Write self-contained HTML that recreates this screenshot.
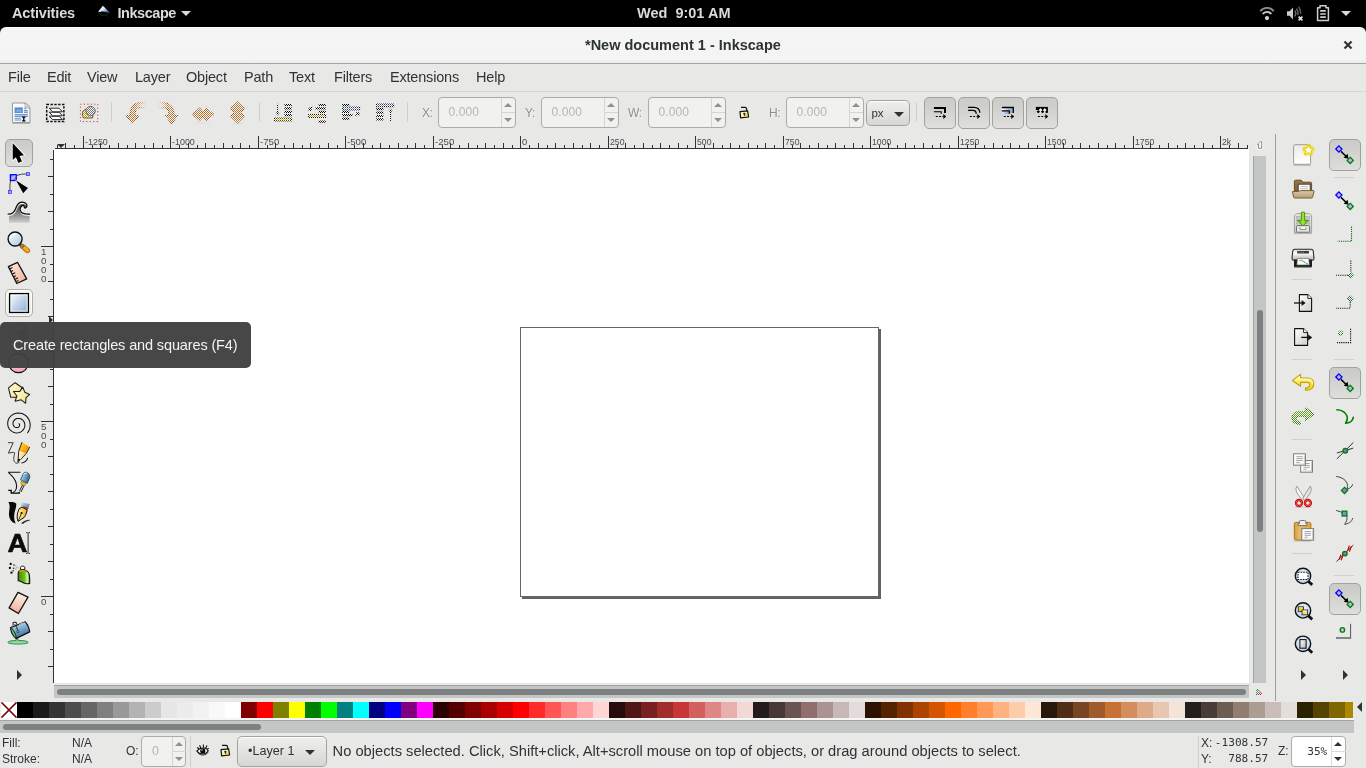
<!DOCTYPE html>
<html><head><meta charset="utf-8"><title>*New document 1 - Inkscape</title>
<style>
*{box-sizing:border-box;margin:0;padding:0}
html,body{width:1366px;height:768px;overflow:hidden;background:#e8e8e7;font-family:"Liberation Sans","DejaVu Sans",sans-serif;color:#2e3436}
.a{position:absolute;white-space:nowrap}
svg{overflow:visible}
#top{left:0;top:0;width:1366px;height:27px;background:#000}
#top .t{color:#dadada;font-weight:bold;font-size:14.5px;line-height:27px;top:0}
#title{left:0;top:27px;width:1366px;height:36px;background:linear-gradient(#fdfdfd 0,#fdfdfd 1px,#f5f5f5 1.5px,#f4f4f4 32px,#ececec 36px);border-radius:6px 6px 0 0}
#titleline{left:0;top:63px;width:1366px;height:1px;background:#a4a4a2}
#title .t{font-weight:bold;font-size:14.5px;line-height:36px;top:0}
#menu{left:0;top:64px;width:1366px;height:27px}
#menu .t{font-size:14.5px;line-height:27px;top:0;letter-spacing:-.2px}
#menuline{left:0;top:91px;width:1366px;height:1px;background:#d6d6d4}
#canvas{left:53px;top:149px;width:1196px;height:534px;background:#fff}
.lbl{font-size:12px;letter-spacing:-.4px;color:#8d9091;line-height:30px;top:98px;text-shadow:1px 1px 0 rgba(255,255,255,.55)}
.spin{top:97px;width:78px;height:31px;border:1px solid #acaca8;border-radius:4px;background:#f1f1f0}
.spin .v{left:9.5px;top:0;line-height:29px;font-size:12px;letter-spacing:.1px;color:#b4b6b6}
.spin .d{left:62px;top:0;width:1px;height:29px;background:#d5d5d3}
.spin .h{left:63px;top:14px;width:13px;height:1px;background:#d5d5d3}
.spin .u{left:65px;top:4.6px;border:4.5px solid transparent;border-top:0;border-bottom:4.6px solid #8e9192;width:0;height:0}
.spin .w{left:65px;top:20px;border:4.5px solid transparent;border-bottom:0;border-top:4.6px solid #8e9192;width:0;height:0}
.sep{width:1px;background:#cfcfcd}
.tb{top:97px;width:32px;height:32px;border:1px solid #a1a19d;border-radius:5px;background:linear-gradient(#cbcbc8,#cfcfcc 30%,#dfdfdd)}
.btn{border:1px solid #a1a19d;border-radius:5px;background:linear-gradient(#cacac7,#cfcfcc 30%,#dededc)}
.nb{border:1px solid #a3a39f;border-radius:5px;background:linear-gradient(#efefee,#e4e4e2 45%,#d6d6d4);box-shadow:inset 0 1px 0 rgba(255,255,255,.9)}
.hov{border:1px solid #adadaa;border-radius:5px;background:linear-gradient(#f7f7f6,#eaeae9);box-shadow:inset 0 0 0 1px rgba(255,255,255,.7)}
.rt{font-size:9.8px;fill:#474c4e;font-family:"Liberation Sans",sans-serif}
.trough{background:#c4c6c5}
.slider{background:#7c8081;border-radius:4px}
.st{font-size:12px;line-height:16px}
.mono{font-family:"DejaVu Sans Mono","Liberation Mono",monospace;font-size:11.1px;line-height:16px}
#tip{left:0;top:322px;width:251px;height:46px;background:rgba(63,63,63,.955);border-radius:5px;color:#f2f2f2;font-size:14.5px;line-height:46px;letter-spacing:-0.13px}
#w{left:0;top:0;width:1366px;height:768px;will-change:transform;background:#e8e8e7}
</style></head><body><div id="w" class="a">

<div id="top" class="a">
<span class="a t" style="left:12px;letter-spacing:-.15px">Activities</span>
<svg class="a" style="left:98px;top:5px" width="16" height="16" viewBox="0 0 16 16"><defs><linearGradient id="ilg" x1="0" y1="0" x2="1" y2="0.6"><stop offset="0" stop-color="#fff"/><stop offset="0.55" stop-color="#dfe6ee"/><stop offset="1" stop-color="#2f64a8"/></linearGradient></defs><path d="M4.9 .8L11.8 7.6C10.6 8 9.6 7.2 8.6 7.4C7.6 7.6 7.2 6.6 6.2 6.8C5.2 7 4.6 6 3.6 6.4C2.6 6.8 1.6 7.2 .2 6.6Z" fill="url(#ilg)"/><path d="M.4 7.4C1.5 9.5 4 10.6 6.4 10.4C8.4 10.2 10 9.4 11 8.2" fill="none" stroke="#2b2b2b" stroke-width="1"/><path d="M2 13.4H3.2M9.6 12.2H10.6" stroke="#1e1e1e" stroke-width="1"/></svg>
<span class="a t" style="left:117.5px;letter-spacing:-0.45px">Inkscape</span>
<span class="a" style="left:181px;top:11px;border:5px solid transparent;border-bottom:0;border-top:5.3px solid #dadada;width:0;height:0"></span>
<span class="a t" style="left:637px">Wed&nbsp; 9:01 AM</span>
<svg class="a" style="left:1259px;top:5px" width="16" height="16" viewBox="0 0 16 16"><path d="M1.3 6.2A8.4 8.4 0 0 1 14.7 6.2" fill="none" stroke="#8e8e8e" stroke-width="1.9"/><path d="M3.7 9A5.4 5.4 0 0 1 12.3 9" fill="none" stroke="#cfcfcf" stroke-width="1.9"/><circle cx="8" cy="13.1" r="2.1" fill="#d4d4d4"/></svg>
<svg class="a" style="left:1286px;top:5px" width="18" height="16" viewBox="0 0 18 16"><path d="M1 6.2H3.6L7 2.6V14.4L3.6 10.8H1Z" fill="#cdcdcd"/><path d="M8.6 5.6A4 4 0 0 1 8.6 11.4" fill="none" stroke="#777" stroke-width="1.3"/><path d="M10.4 3.6A6.6 6.6 0 0 1 11.6 10" fill="none" stroke="#6a6a6a" stroke-width="1.3"/><path d="M12.4 1.8A9 9 0 0 1 14.6 9" fill="none" stroke="#5a5a5a" stroke-width="1.3"/><path d="M12.6 11.6L16.4 15.4M16.4 11.6L12.6 15.4" stroke="#dcdcdc" stroke-width="1.7"/></svg>
<svg class="a" style="left:1315px;top:5px" width="16" height="16" viewBox="0 0 16 16"><path d="M5 .8H11V2.8H13.4V15.4H2.6V2.8H5Z" fill="none" stroke="#cfcfcf" stroke-width="1.5" stroke-linejoin="round"/><path d="M5.2 5.8H10.8M5.2 9H10.8M5.2 12.2H10.8" stroke="#cfcfcf" stroke-width="1.7"/></svg>
<span class="a" style="left:1341px;top:11px;border:5px solid transparent;border-bottom:0;border-top:5.5px solid #dadada;width:0;height:0"></span>
</div>
<div class="a" style="left:0;top:27px;width:1366px;height:10px;background:#000"></div><div id="title" class="a"><span class="a t" style="left:585px">*New document 1 - Inkscape</span>
<svg class="a" style="left:1343px;top:13px" width="10" height="10" viewBox="0 0 10 10"><path d="M1.5 1.5L8.5 8.5M8.5 1.5L1.5 8.5" stroke="#2e3436" stroke-width="2.2" fill="none"/></svg>
</div><div id="titleline" class="a"></div>
<div id="menu" class="a">
<span class="a t" style="left:8px">File</span>
<span class="a t" style="left:47px">Edit</span>
<span class="a t" style="left:87px">View</span>
<span class="a t" style="left:135px">Layer</span>
<span class="a t" style="left:186px">Object</span>
<span class="a t" style="left:244px">Path</span>
<span class="a t" style="left:289px">Text</span>
<span class="a t" style="left:334px">Filters</span>
<span class="a t" style="left:390px">Extensions</span>
<span class="a t" style="left:476px">Help</span>
</div><div id="menuline" class="a"></div>
<svg class="a" style="left:9px;top:101px" width="24" height="24" viewBox="0 0 24 24"><defs><linearGradient id="sag" x1="0" y1="0" x2="1" y2="1"><stop offset="0" stop-color="#ffffff"/><stop offset="1" stop-color="#ececec"/></linearGradient></defs><path d="M3.4 22.3H21.2" stroke="#8c8c8a" stroke-width="1.2" opacity=".6"/><path d="M3.5 2H15.5C18 2.6 20.4 5 21 7.6V21.5H3.5Z" fill="url(#sag)" stroke="#9a9a98" stroke-width="1" stroke-linejoin="round"/><path d="M15.5 2C16.4 3.6 16.4 5.4 16 6.8C17.6 6.4 19.6 6.6 21 7.6C20.4 5 18 2.6 15.5 2Z" fill="#d8d8d8" stroke="#9a9a98" stroke-width=".7" stroke-linejoin="round"/><rect x="5.6" y="6.4" width="8.2" height="5.6" fill="#5c8fd0"/><path d="M7 10.6L8.6 8.2L10.2 10L11.4 8.6L12.6 10.6Z" fill="#9fc0e8"/><path d="M15 7.8H17.4M15 9.6H18.8M15 11.4H18.8M5.6 13.6H18.8M5.6 15.4H18.8M5.6 17.2H12M5.6 19H12" stroke="#6a9ad6" stroke-width="1.1"/><path d="M13.2 16.2H16.4M13.2 19.8H16.4M14.8 16.4V19.6" stroke="#000" stroke-width="1.3"/></svg>
<svg class="a" style="left:43px;top:101px" width="24" height="24" viewBox="0 0 24 24"><rect x="3.7" y="3.4" width="17.2" height="17.2" fill="none" stroke="#111" stroke-width="1.5" stroke-dasharray="2.4 1.4"/><path d="M6.4 15.2L16 15.2L19.4 18.6H9.6Z" fill="#fff" stroke="#111" stroke-width=".9" stroke-linejoin="round"/><path d="M6.4 11.2L16 11.2L19.4 14.8H9.6Z" fill="#fff" stroke="#111" stroke-width=".9" stroke-linejoin="round"/><path d="M6.4 7.2L16 7.2L19.4 10.8H9.6Z" fill="#fff" stroke="#111" stroke-width=".9" stroke-linejoin="round"/></svg>
<svg class="a" style="left:77px;top:101px" width="24" height="24" viewBox="0 0 24 24"><defs><pattern id="stp" width="2" height="2" patternUnits="userSpaceOnUse"><rect width="2" height="2" fill="#f4f4f4"/><rect width="1" height="1" fill="#777"/><rect x="1" y="1" width="1" height="1" fill="#777"/></pattern><pattern id="stq" width="2" height="2" patternUnits="userSpaceOnUse"><rect width="2" height="2" fill="#fff8c8"/><rect width="1" height="1" fill="#c8960a"/><rect x="1" y="1" width="1" height="1" fill="#c8960a"/></pattern></defs><rect x="3.4" y="3.2" width="17.4" height="17.4" fill="none" stroke="#a82020" stroke-width=".9" stroke-dasharray="1.1 2.38"/><path d="M5.6 10.4L8.4 8.4L12 9.6L16 14L15.6 17H6.4L5.4 14.6Z" fill="url(#stq)" stroke="#555" stroke-width=".9" stroke-linejoin="round" shape-rendering="crispEdges"/><circle cx="13.6" cy="10" r="4.7" fill="url(#stp)" stroke="#666" stroke-width=".9"/></svg>
<div class="a sep" style="left:111px;top:102px;height:20px"></div>
<svg class="a" style="left:123px;top:101px" width="24" height="24" viewBox="0 0 24 24"><defs><pattern id="ckpa" width="2" height="2" patternUnits="userSpaceOnUse"><rect width="2" height="2" fill="#000"/><rect width="1" height="1" fill="#fff" shape-rendering="crispEdges"/><rect x="1" y="1" width="1" height="1" fill="#fff" shape-rendering="crispEdges"/></pattern><mask id="ckma" maskUnits="userSpaceOnUse" x="0" y="0" width="24" height="24"><rect width="24" height="24" fill="url(#ckpa)"/></mask><filter id="ckwa" x="0" y="0" width="1" height="1"><feColorMatrix values="0 0 0 0 1  0 0 0 0 1  0 0 0 0 1  0 0 0 1 0"/></filter><linearGradient id="ras" x1="0" y1="0" x2="1" y2="0"><stop offset="0" stop-color="#7c3a04"/><stop offset="0.6" stop-color="#7c3a04"/><stop offset="1" stop-color="#7c3a04" stop-opacity=".15"/></linearGradient><linearGradient id="rag" x1="0" y1="0" x2="1" y2="0"><stop offset="0" stop-color="#b06a26"/><stop offset="0.55" stop-color="#bd8044"/><stop offset="1" stop-color="#e6d0c0" stop-opacity=".3"/></linearGradient></defs><g filter="url(#ckwa)" opacity=".8"><path d="M9.4 22.8L3 14.4H7C7 7 10 1.8 17 1.8H22.3V6.9H17C13.5 6.9 12.1 9.5 12.1 14.4H16Z" fill="url(#rag)" stroke="url(#ras)" stroke-width=".9"/></g><g mask="url(#ckma)"><path d="M9.4 22.8L3 14.4H7C7 7 10 1.8 17 1.8H22.3V6.9H17C13.5 6.9 12.1 9.5 12.1 14.4H16Z" fill="url(#rag)" stroke="url(#ras)" stroke-width=".9"/></g></svg>
<svg class="a" style="left:157px;top:101px" width="24" height="24" viewBox="0 0 24 24"><defs><pattern id="ckpb" width="2" height="2" patternUnits="userSpaceOnUse"><rect width="2" height="2" fill="#000"/><rect width="1" height="1" fill="#fff" shape-rendering="crispEdges"/><rect x="1" y="1" width="1" height="1" fill="#fff" shape-rendering="crispEdges"/></pattern><mask id="ckmb" maskUnits="userSpaceOnUse" x="0" y="0" width="24" height="24"><rect width="24" height="24" fill="url(#ckpb)"/></mask><filter id="ckwb" x="0" y="0" width="1" height="1"><feColorMatrix values="0 0 0 0 1  0 0 0 0 1  0 0 0 0 1  0 0 0 1 0"/></filter><linearGradient id="rbs" x1="1" y1="0" x2="0" y2="0"><stop offset="0" stop-color="#7c3a04"/><stop offset="0.6" stop-color="#7c3a04"/><stop offset="1" stop-color="#7c3a04" stop-opacity=".15"/></linearGradient><linearGradient id="rbg" x1="1" y1="0" x2="0" y2="0"><stop offset="0" stop-color="#b06a26"/><stop offset="0.55" stop-color="#bd8044"/><stop offset="1" stop-color="#e6d0c0" stop-opacity=".3"/></linearGradient></defs><g filter="url(#ckwb)" opacity=".8"><path d="M14.6 22.8L21 14.4H17C17 7 14 1.8 7 1.8H1.7V6.9H7C10.5 6.9 11.9 9.5 11.9 14.4H8Z" fill="url(#rbg)" stroke="url(#rbs)" stroke-width=".9"/></g><g mask="url(#ckmb)"><path d="M14.6 22.8L21 14.4H17C17 7 14 1.8 7 1.8H1.7V6.9H7C10.5 6.9 11.9 9.5 11.9 14.4H8Z" fill="url(#rbg)" stroke="url(#rbs)" stroke-width=".9"/></g></svg>
<svg class="a" style="left:191px;top:101px" width="24" height="24" viewBox="0 0 24 24"><defs><pattern id="ckpc" width="2" height="2" patternUnits="userSpaceOnUse"><rect width="2" height="2" fill="#000"/><rect width="1" height="1" fill="#fff" shape-rendering="crispEdges"/><rect x="1" y="1" width="1" height="1" fill="#fff" shape-rendering="crispEdges"/></pattern><mask id="ckmc" maskUnits="userSpaceOnUse" x="0" y="0" width="24" height="24"><rect width="24" height="24" fill="url(#ckpc)"/></mask><filter id="ckwc" x="0" y="0" width="1" height="1"><feColorMatrix values="0 0 0 0 1  0 0 0 0 1  0 0 0 0 1  0 0 0 1 0"/></filter></defs><g filter="url(#ckwc)" opacity=".8"><path d="M1.7 13.4L8.5 7L10.9 9.2V11H13.1V9.2L15.5 7L23 13.4L15.5 19.8L13.1 17.6V15.8H10.9V17.6L8.5 19.8Z" fill="#b5742e" stroke="#7c3a04" stroke-width=".9"/></g><g mask="url(#ckmc)"><path d="M1.7 13.4L8.5 7L10.9 9.2V11H13.1V9.2L15.5 7L23 13.4L15.5 19.8L13.1 17.6V15.8H10.9V17.6L8.5 19.8Z" fill="#b5742e" stroke="#7c3a04" stroke-width=".9"/></g><path d="M3 22H21" stroke="#888" stroke-width="1" opacity=".08"/></svg>
<svg class="a" style="left:225px;top:101px" width="24" height="24" viewBox="0 0 24 24"><defs><pattern id="ckpd" width="2" height="2" patternUnits="userSpaceOnUse"><rect width="2" height="2" fill="#000"/><rect width="1" height="1" fill="#fff" shape-rendering="crispEdges"/><rect x="1" y="1" width="1" height="1" fill="#fff" shape-rendering="crispEdges"/></pattern><mask id="ckmd" maskUnits="userSpaceOnUse" x="0" y="0" width="24" height="24"><rect width="24" height="24" fill="url(#ckpd)"/></mask><filter id="ckwd" x="0" y="0" width="1" height="1"><feColorMatrix values="0 0 0 0 1  0 0 0 0 1  0 0 0 0 1  0 0 0 1 0"/></filter></defs><g filter="url(#ckwd)" opacity=".8"><path d="M12.5 .9L19.3 7.6L17.2 10.4H14.9V12.6H17.2L19.3 15.3L12.5 22L5.7 15.3L7.8 12.6H10.1V10.4H7.8L5.7 7.6Z" fill="#b5742e" stroke="#7c3a04" stroke-width=".9"/></g><g mask="url(#ckmd)"><path d="M12.5 .9L19.3 7.6L17.2 10.4H14.9V12.6H17.2L19.3 15.3L12.5 22L5.7 15.3L7.8 12.6H10.1V10.4H7.8L5.7 7.6Z" fill="#b5742e" stroke="#7c3a04" stroke-width=".9"/></g><path d="M7.4 22.8H17.4" stroke="#888" stroke-width="1.2" opacity=".12"/></svg>
<div class="a sep" style="left:259px;top:102px;height:20px"></div>
<svg class="a" style="left:271px;top:101px" width="24" height="24" viewBox="0 0 24 24"><defs><pattern id="ckpe" width="2" height="2" patternUnits="userSpaceOnUse"><rect width="2" height="2" fill="#000"/><rect width="1" height="1" fill="#fff" shape-rendering="crispEdges"/><rect x="1" y="1" width="1" height="1" fill="#fff" shape-rendering="crispEdges"/></pattern><mask id="ckme" maskUnits="userSpaceOnUse" x="0" y="0" width="24" height="24"><rect width="24" height="24" fill="url(#ckpe)"/></mask><filter id="ckwe" x="0" y="0" width="1" height="1"><feColorMatrix values="0 0 0 0 1  0 0 0 0 1  0 0 0 0 1  0 0 0 1 0"/></filter></defs><g filter="url(#ckwe)" opacity=".8"><path d="M13.4 4H20.8M13.4 7.4H20.8M13.4 10.8H20.8M13.4 14.2H20.8" stroke="#000" stroke-width="2.2"/><rect x="3.6" y="17.1" width="17" height="2.8" fill="#e0b000" stroke="#000" stroke-width="1"/><path d="M6.6 2.8V12" stroke="#000" stroke-width="1"/><path d="M4.2 11.4H9L6.6 14.6Z" fill="#000"/></g><g mask="url(#ckme)"><path d="M13.4 4H20.8M13.4 7.4H20.8M13.4 10.8H20.8M13.4 14.2H20.8" stroke="#000" stroke-width="2.2"/><rect x="3.6" y="17.1" width="17" height="2.8" fill="#e0b000" stroke="#000" stroke-width="1"/><path d="M6.6 2.8V12" stroke="#000" stroke-width="1"/><path d="M4.2 11.4H9L6.6 14.6Z" fill="#000"/></g></svg>
<svg class="a" style="left:305px;top:101px" width="24" height="24" viewBox="0 0 24 24"><defs><pattern id="ckpf" width="2" height="2" patternUnits="userSpaceOnUse"><rect width="2" height="2" fill="#000"/><rect width="1" height="1" fill="#fff" shape-rendering="crispEdges"/><rect x="1" y="1" width="1" height="1" fill="#fff" shape-rendering="crispEdges"/></pattern><mask id="ckmf" maskUnits="userSpaceOnUse" x="0" y="0" width="24" height="24"><rect width="24" height="24" fill="url(#ckpf)"/></mask><filter id="ckwf" x="0" y="0" width="1" height="1"><feColorMatrix values="0 0 0 0 1  0 0 0 0 1  0 0 0 0 1  0 0 0 1 0"/></filter></defs><g filter="url(#ckwf)" opacity=".8"><path d="M13.6 4H20.8M10.4 7.4H20.8M13.6 10.8H20.8M13.6 20.6H20.8" stroke="#000" stroke-width="2.2"/><rect x="3.6" y="13.6" width="17" height="2.8" fill="#e0b000" stroke="#000" stroke-width="1"/><path d="M7.4 5.8L4.6 8.6M4.2 6.4V9H6.8" fill="none" stroke="#000" stroke-width="1.3"/></g><g mask="url(#ckmf)"><path d="M13.6 4H20.8M10.4 7.4H20.8M13.6 10.8H20.8M13.6 20.6H20.8" stroke="#000" stroke-width="2.2"/><rect x="3.6" y="13.6" width="17" height="2.8" fill="#e0b000" stroke="#000" stroke-width="1"/><path d="M7.4 5.8L4.6 8.6M4.2 6.4V9H6.8" fill="none" stroke="#000" stroke-width="1.3"/></g></svg>
<svg class="a" style="left:339px;top:101px" width="24" height="24" viewBox="0 0 24 24"><defs><pattern id="ckpg" width="2" height="2" patternUnits="userSpaceOnUse"><rect width="2" height="2" fill="#000"/><rect width="1" height="1" fill="#fff" shape-rendering="crispEdges"/><rect x="1" y="1" width="1" height="1" fill="#fff" shape-rendering="crispEdges"/></pattern><mask id="ckmg" maskUnits="userSpaceOnUse" x="0" y="0" width="24" height="24"><rect width="24" height="24" fill="url(#ckpg)"/></mask><filter id="ckwg" x="0" y="0" width="1" height="1"><feColorMatrix values="0 0 0 0 1  0 0 0 0 1  0 0 0 0 1  0 0 0 1 0"/></filter></defs><g filter="url(#ckwg)" opacity=".8"><path d="M3.2 4H10.4M3.2 10.8H10.4M3.2 14.2H13.6M3.2 17.6H10.4" stroke="#000" stroke-width="2.2"/><rect x="3.6" y="6.1" width="17" height="2.8" fill="#7aa0d8" stroke="#000" stroke-width="1"/><path d="M16.6 15L19.4 12.2M17.2 11.8H19.8V14.4" fill="none" stroke="#000" stroke-width="1.3"/></g><g mask="url(#ckmg)"><path d="M3.2 4H10.4M3.2 10.8H10.4M3.2 14.2H13.6M3.2 17.6H10.4" stroke="#000" stroke-width="2.2"/><rect x="3.6" y="6.1" width="17" height="2.8" fill="#7aa0d8" stroke="#000" stroke-width="1"/><path d="M16.6 15L19.4 12.2M17.2 11.8H19.8V14.4" fill="none" stroke="#000" stroke-width="1.3"/></g></svg>
<svg class="a" style="left:373px;top:101px" width="24" height="24" viewBox="0 0 24 24"><defs><pattern id="ckph" width="2" height="2" patternUnits="userSpaceOnUse"><rect width="2" height="2" fill="#000"/><rect width="1" height="1" fill="#fff" shape-rendering="crispEdges"/><rect x="1" y="1" width="1" height="1" fill="#fff" shape-rendering="crispEdges"/></pattern><mask id="ckmh" maskUnits="userSpaceOnUse" x="0" y="0" width="24" height="24"><rect width="24" height="24" fill="url(#ckph)"/></mask><filter id="ckwh" x="0" y="0" width="1" height="1"><feColorMatrix values="0 0 0 0 1  0 0 0 0 1  0 0 0 0 1  0 0 0 1 0"/></filter></defs><g filter="url(#ckwh)" opacity=".8"><path d="M3.2 8.2H10.4M3.2 11.6H10.4M3.2 15H10.4M3.2 18.4H10.4" stroke="#000" stroke-width="2.2"/><rect x="3.6" y="3.1" width="17" height="2.6" fill="#7aa0d8" stroke="#000" stroke-width="1"/><path d="M17.6 20V10" stroke="#000" stroke-width="1"/><path d="M15.2 10.6H20L17.6 7.4Z" fill="#000"/></g><g mask="url(#ckmh)"><path d="M3.2 8.2H10.4M3.2 11.6H10.4M3.2 15H10.4M3.2 18.4H10.4" stroke="#000" stroke-width="2.2"/><rect x="3.6" y="3.1" width="17" height="2.6" fill="#7aa0d8" stroke="#000" stroke-width="1"/><path d="M17.6 20V10" stroke="#000" stroke-width="1"/><path d="M15.2 10.6H20L17.6 7.4Z" fill="#000"/></g></svg>
<div class="a sep" style="left:407px;top:102px;height:20px"></div>
<span class="a lbl" style="left:422px">X:</span>
<div class="a spin" style="left:438px"><span class="a v">0.000</span><span class="a d"></span><span class="a h"></span><span class="a u"></span><span class="a w"></span></div>
<span class="a lbl" style="left:525px">Y:</span>
<div class="a spin" style="left:541px"><span class="a v">0.000</span><span class="a d"></span><span class="a h"></span><span class="a u"></span><span class="a w"></span></div>
<span class="a lbl" style="left:628px">W:</span>
<div class="a spin" style="left:648px"><span class="a v">0.000</span><span class="a d"></span><span class="a h"></span><span class="a u"></span><span class="a w"></span></div>
<svg class="a" style="left:738px;top:106px" width="12" height="13" viewBox="0 0 12 13"><defs><linearGradient id="lkg1" x1="0" y1="0" x2="1" y2="1"><stop offset="0" stop-color="#ffffff"/><stop offset="0.5" stop-color="#fbf0a0"/><stop offset="1" stop-color="#e8c81a"/></linearGradient></defs><path d="M3 1.4H7C8.5 1.4 8.8 2.8 8.9 5.2" fill="none" stroke="#111" stroke-width="1.2"/><path d="M2 5.6L9.6 4.9L10.6 11L2.6 11.8Z" fill="url(#lkg1)" stroke="#111" stroke-width="1.2" stroke-linejoin="round"/><path d="M5.4 7.2H7.2L6.6 9.8Z" fill="#111" stroke="#111" stroke-width=".5"/></svg>
<span class="a lbl" style="left:769px">H:</span>
<div class="a spin" style="left:786px"><span class="a v">0.000</span><span class="a d"></span><span class="a h"></span><span class="a u"></span><span class="a w"></span></div>
<div class="a nb" style="left:866px;top:100px;width:44px;height:26px"><span class="a" style="left:4.5px;top:0;line-height:24px;font-size:11.6px;letter-spacing:-.3px">px</span><span class="a" style="left:27px;top:10.5px;border:5.2px solid transparent;border-bottom:0;border-top:5.2px solid #2e3436;width:0;height:0"></span></div>
<div class="a sep" style="left:916px;top:102px;height:20px"></div>
<div class="a tb" style="left:924px"><svg class="a" style="left:7px;top:7px" width="16" height="16" viewBox="0 0 16 16"><path d="M1.9 2.9H13V7.9" fill="none" stroke="#000" stroke-width="2"/><path d="M1.9 6.7H9.2V8.7" fill="none" stroke="#000" stroke-width="1.1"/><path d="M3.8 11.5H11.4" stroke="#000" stroke-width="1.2" stroke-dasharray="2 1.3"/><path d="M14.2 11.5L11.3 9.1V13.9Z" fill="#000"/></svg></div>
<div class="a tb" style="left:958px"><svg class="a" style="left:7px;top:7px" width="16" height="16" viewBox="0 0 16 16"><path d="M2.1 2.4H8C11.5 2.4 13.8 4.5 13.8 7.7" fill="none" stroke="#000" stroke-width="1.3"/><path d="M2.1 5.4H7C9 5.4 10.2 7 10.2 8.7" fill="none" stroke="#000" stroke-width="1.3"/><path d="M3.9 11.5H11.4" stroke="#000" stroke-width="1.2" stroke-dasharray="2 1.3"/><path d="M14.2 11.5L11.3 9.1V13.9Z" fill="#000"/></svg></div>
<div class="a tb" style="left:992px"><svg class="a" style="left:7px;top:7px" width="16" height="16" viewBox="0 0 16 16"><defs><linearGradient id="tgg" x1="0" y1="0" x2="1" y2="0"><stop offset="0" stop-color="#ffffff"/><stop offset="1" stop-color="#7ea6d8"/></linearGradient><linearGradient id="tgh" x1="0" y1="0" x2="1" y2="0"><stop offset="0" stop-color="#e0eaf6"/><stop offset="1" stop-color="#6f98cc"/></linearGradient></defs><path d="M1.9 2.9H12.8V7.9H9.9V5.4H1.9Z" fill="url(#tgg)"/><rect x="1.9" y="6.4" width="7" height="2.4" fill="url(#tgh)"/><path d="M1.9 2.5H13.3V7.9" fill="none" stroke="#000" stroke-width="1.3"/><path d="M1.9 5.9H9.4V8.7" fill="none" stroke="#000" stroke-width="1.3"/><path d="M3.8 11.5H11.4" stroke="#000" stroke-width="1.2" stroke-dasharray="2 1.3"/><path d="M14.2 11.5L11.3 9.1V13.9Z" fill="#000"/></svg></div>
<div class="a tb" style="left:1026px"><svg class="a" style="left:7px;top:7px" width="16" height="16" viewBox="0 0 16 16"><rect x="1.9" y="1.9" width="12" height="6" fill="#000"/><rect x="1.9" y="5" width="9.6" height="3.2" fill="#e4e4e2"/><path d="M6.5 3.1L8.3 4.9L6.5 6.7L4.7 4.9ZM10.8 3.1L12.6 4.9L10.8 6.7L9 4.9Z" fill="#f0f0f0"/><path d="M4.3 4.9L6.1 6.7L4.3 8.3L2.5 6.7ZM8.6 4.9L10.4 6.7L8.6 8.3L6.8 6.7Z" fill="#000"/><path d="M3.9 11.5H11.4" stroke="#000" stroke-width="1.2" stroke-dasharray="2 1.3"/><path d="M14.2 11.5L11.3 9.1V13.9Z" fill="#000"/></svg></div>
<div id="canvas" class="a"></div>
<svg class="a" style="left:0;top:130px" width="1280" height="560" viewBox="0 130 1280 560" shape-rendering="crispEdges"><rect x="55" y="148" width="1193" height="1" fill="#2e3436"/><rect x="57" y="145" width="1" height="3" fill="#2e3436"/><rect x="65" y="143" width="1" height="5" fill="#2e3436"/><rect x="74" y="145" width="1" height="3" fill="#2e3436"/><rect x="83" y="136" width="1" height="12" fill="#2e3436"/><text class="rt" x="85" y="144.6" shape-rendering="auto" textLength="22.8" lengthAdjust="spacingAndGlyphs">-1250</text><rect x="92" y="145" width="1" height="3" fill="#2e3436"/><rect x="100" y="143" width="1" height="5" fill="#2e3436"/><rect x="109" y="145" width="1" height="3" fill="#2e3436"/><rect x="118" y="143" width="1" height="5" fill="#2e3436"/><rect x="127" y="145" width="1" height="3" fill="#2e3436"/><rect x="135" y="143" width="1" height="5" fill="#2e3436"/><rect x="144" y="145" width="1" height="3" fill="#2e3436"/><rect x="153" y="143" width="1" height="5" fill="#2e3436"/><rect x="162" y="145" width="1" height="3" fill="#2e3436"/><rect x="170" y="136" width="1" height="12" fill="#2e3436"/><text class="rt" x="172" y="144.6" shape-rendering="auto" textLength="22.8" lengthAdjust="spacingAndGlyphs">-1000</text><rect x="179" y="145" width="1" height="3" fill="#2e3436"/><rect x="188" y="143" width="1" height="5" fill="#2e3436"/><rect x="197" y="145" width="1" height="3" fill="#2e3436"/><rect x="205" y="143" width="1" height="5" fill="#2e3436"/><rect x="214" y="145" width="1" height="3" fill="#2e3436"/><rect x="223" y="143" width="1" height="5" fill="#2e3436"/><rect x="232" y="145" width="1" height="3" fill="#2e3436"/><rect x="240" y="143" width="1" height="5" fill="#2e3436"/><rect x="249" y="145" width="1" height="3" fill="#2e3436"/><rect x="258" y="136" width="1" height="12" fill="#2e3436"/><text class="rt" x="260" y="144.6" shape-rendering="auto" textLength="19.3" lengthAdjust="spacingAndGlyphs">-750</text><rect x="267" y="145" width="1" height="3" fill="#2e3436"/><rect x="275" y="143" width="1" height="5" fill="#2e3436"/><rect x="284" y="145" width="1" height="3" fill="#2e3436"/><rect x="293" y="143" width="1" height="5" fill="#2e3436"/><rect x="302" y="145" width="1" height="3" fill="#2e3436"/><rect x="310" y="143" width="1" height="5" fill="#2e3436"/><rect x="319" y="145" width="1" height="3" fill="#2e3436"/><rect x="328" y="143" width="1" height="5" fill="#2e3436"/><rect x="337" y="145" width="1" height="3" fill="#2e3436"/><rect x="345" y="136" width="1" height="12" fill="#2e3436"/><text class="rt" x="347" y="144.6" shape-rendering="auto" textLength="19.3" lengthAdjust="spacingAndGlyphs">-500</text><rect x="354" y="145" width="1" height="3" fill="#2e3436"/><rect x="363" y="143" width="1" height="5" fill="#2e3436"/><rect x="372" y="145" width="1" height="3" fill="#2e3436"/><rect x="380" y="143" width="1" height="5" fill="#2e3436"/><rect x="389" y="145" width="1" height="3" fill="#2e3436"/><rect x="398" y="143" width="1" height="5" fill="#2e3436"/><rect x="407" y="145" width="1" height="3" fill="#2e3436"/><rect x="415" y="143" width="1" height="5" fill="#2e3436"/><rect x="424" y="145" width="1" height="3" fill="#2e3436"/><rect x="433" y="136" width="1" height="12" fill="#2e3436"/><text class="rt" x="435" y="144.6" shape-rendering="auto" textLength="19.3" lengthAdjust="spacingAndGlyphs">-250</text><rect x="442" y="145" width="1" height="3" fill="#2e3436"/><rect x="450" y="143" width="1" height="5" fill="#2e3436"/><rect x="459" y="145" width="1" height="3" fill="#2e3436"/><rect x="468" y="143" width="1" height="5" fill="#2e3436"/><rect x="477" y="145" width="1" height="3" fill="#2e3436"/><rect x="485" y="143" width="1" height="5" fill="#2e3436"/><rect x="494" y="145" width="1" height="3" fill="#2e3436"/><rect x="503" y="143" width="1" height="5" fill="#2e3436"/><rect x="512" y="145" width="1" height="3" fill="#2e3436"/><rect x="520" y="136" width="1" height="12" fill="#2e3436"/><text class="rt" x="522" y="144.6" shape-rendering="auto" textLength="5.2" lengthAdjust="spacingAndGlyphs">0</text><rect x="529" y="145" width="1" height="3" fill="#2e3436"/><rect x="538" y="143" width="1" height="5" fill="#2e3436"/><rect x="547" y="145" width="1" height="3" fill="#2e3436"/><rect x="555" y="143" width="1" height="5" fill="#2e3436"/><rect x="564" y="145" width="1" height="3" fill="#2e3436"/><rect x="573" y="143" width="1" height="5" fill="#2e3436"/><rect x="582" y="145" width="1" height="3" fill="#2e3436"/><rect x="590" y="143" width="1" height="5" fill="#2e3436"/><rect x="599" y="145" width="1" height="3" fill="#2e3436"/><rect x="608" y="136" width="1" height="12" fill="#2e3436"/><text class="rt" x="610" y="144.6" shape-rendering="auto" textLength="14.5" lengthAdjust="spacingAndGlyphs">250</text><rect x="617" y="145" width="1" height="3" fill="#2e3436"/><rect x="625" y="143" width="1" height="5" fill="#2e3436"/><rect x="634" y="145" width="1" height="3" fill="#2e3436"/><rect x="643" y="143" width="1" height="5" fill="#2e3436"/><rect x="652" y="145" width="1" height="3" fill="#2e3436"/><rect x="660" y="143" width="1" height="5" fill="#2e3436"/><rect x="669" y="145" width="1" height="3" fill="#2e3436"/><rect x="678" y="143" width="1" height="5" fill="#2e3436"/><rect x="687" y="145" width="1" height="3" fill="#2e3436"/><rect x="695" y="136" width="1" height="12" fill="#2e3436"/><text class="rt" x="697" y="144.6" shape-rendering="auto" textLength="14.5" lengthAdjust="spacingAndGlyphs">500</text><rect x="704" y="145" width="1" height="3" fill="#2e3436"/><rect x="713" y="143" width="1" height="5" fill="#2e3436"/><rect x="722" y="145" width="1" height="3" fill="#2e3436"/><rect x="730" y="143" width="1" height="5" fill="#2e3436"/><rect x="739" y="145" width="1" height="3" fill="#2e3436"/><rect x="748" y="143" width="1" height="5" fill="#2e3436"/><rect x="757" y="145" width="1" height="3" fill="#2e3436"/><rect x="765" y="143" width="1" height="5" fill="#2e3436"/><rect x="774" y="145" width="1" height="3" fill="#2e3436"/><rect x="783" y="136" width="1" height="12" fill="#2e3436"/><text class="rt" x="785" y="144.6" shape-rendering="auto" textLength="14.5" lengthAdjust="spacingAndGlyphs">750</text><rect x="792" y="145" width="1" height="3" fill="#2e3436"/><rect x="800" y="143" width="1" height="5" fill="#2e3436"/><rect x="809" y="145" width="1" height="3" fill="#2e3436"/><rect x="818" y="143" width="1" height="5" fill="#2e3436"/><rect x="827" y="145" width="1" height="3" fill="#2e3436"/><rect x="835" y="143" width="1" height="5" fill="#2e3436"/><rect x="844" y="145" width="1" height="3" fill="#2e3436"/><rect x="853" y="143" width="1" height="5" fill="#2e3436"/><rect x="862" y="145" width="1" height="3" fill="#2e3436"/><rect x="870" y="136" width="1" height="12" fill="#2e3436"/><text class="rt" x="872" y="144.6" shape-rendering="auto" textLength="19.3" lengthAdjust="spacingAndGlyphs">1000</text><rect x="879" y="145" width="1" height="3" fill="#2e3436"/><rect x="888" y="143" width="1" height="5" fill="#2e3436"/><rect x="897" y="145" width="1" height="3" fill="#2e3436"/><rect x="905" y="143" width="1" height="5" fill="#2e3436"/><rect x="914" y="145" width="1" height="3" fill="#2e3436"/><rect x="923" y="143" width="1" height="5" fill="#2e3436"/><rect x="932" y="145" width="1" height="3" fill="#2e3436"/><rect x="940" y="143" width="1" height="5" fill="#2e3436"/><rect x="949" y="145" width="1" height="3" fill="#2e3436"/><rect x="958" y="136" width="1" height="12" fill="#2e3436"/><text class="rt" x="960" y="144.6" shape-rendering="auto" textLength="19.3" lengthAdjust="spacingAndGlyphs">1250</text><rect x="967" y="145" width="1" height="3" fill="#2e3436"/><rect x="975" y="143" width="1" height="5" fill="#2e3436"/><rect x="984" y="145" width="1" height="3" fill="#2e3436"/><rect x="993" y="143" width="1" height="5" fill="#2e3436"/><rect x="1002" y="145" width="1" height="3" fill="#2e3436"/><rect x="1010" y="143" width="1" height="5" fill="#2e3436"/><rect x="1019" y="145" width="1" height="3" fill="#2e3436"/><rect x="1028" y="143" width="1" height="5" fill="#2e3436"/><rect x="1037" y="145" width="1" height="3" fill="#2e3436"/><rect x="1045" y="136" width="1" height="12" fill="#2e3436"/><text class="rt" x="1047" y="144.6" shape-rendering="auto" textLength="19.3" lengthAdjust="spacingAndGlyphs">1500</text><rect x="1054" y="145" width="1" height="3" fill="#2e3436"/><rect x="1063" y="143" width="1" height="5" fill="#2e3436"/><rect x="1072" y="145" width="1" height="3" fill="#2e3436"/><rect x="1080" y="143" width="1" height="5" fill="#2e3436"/><rect x="1089" y="145" width="1" height="3" fill="#2e3436"/><rect x="1098" y="143" width="1" height="5" fill="#2e3436"/><rect x="1107" y="145" width="1" height="3" fill="#2e3436"/><rect x="1115" y="143" width="1" height="5" fill="#2e3436"/><rect x="1124" y="145" width="1" height="3" fill="#2e3436"/><rect x="1133" y="136" width="1" height="12" fill="#2e3436"/><text class="rt" x="1135" y="144.6" shape-rendering="auto" textLength="19.3" lengthAdjust="spacingAndGlyphs">1750</text><rect x="1142" y="145" width="1" height="3" fill="#2e3436"/><rect x="1150" y="143" width="1" height="5" fill="#2e3436"/><rect x="1159" y="145" width="1" height="3" fill="#2e3436"/><rect x="1168" y="143" width="1" height="5" fill="#2e3436"/><rect x="1177" y="145" width="1" height="3" fill="#2e3436"/><rect x="1185" y="143" width="1" height="5" fill="#2e3436"/><rect x="1194" y="145" width="1" height="3" fill="#2e3436"/><rect x="1203" y="143" width="1" height="5" fill="#2e3436"/><rect x="1212" y="145" width="1" height="3" fill="#2e3436"/><rect x="1220" y="136" width="1" height="12" fill="#2e3436"/><text class="rt" x="1222" y="144.6" shape-rendering="auto" textLength="9.2" lengthAdjust="spacingAndGlyphs">2k</text><rect x="1229" y="145" width="1" height="3" fill="#2e3436"/><rect x="1238" y="143" width="1" height="5" fill="#2e3436"/><rect x="1247" y="145" width="1" height="3" fill="#2e3436"/><rect x="53" y="150" width="1" height="533" fill="#2e3436"/><rect x="50" y="159" width="3" height="1" fill="#2e3436"/><rect x="48" y="176" width="5" height="1" fill="#2e3436"/><rect x="50" y="194" width="3" height="1" fill="#2e3436"/><rect x="48" y="211" width="5" height="1" fill="#2e3436"/><rect x="50" y="229" width="3" height="1" fill="#2e3436"/><rect x="41" y="246" width="12" height="1" fill="#2e3436"/><text class="rt" x="41" y="254.6" shape-rendering="auto">1</text><text class="rt" x="41" y="263.6" shape-rendering="auto">0</text><text class="rt" x="41" y="272.6" shape-rendering="auto">0</text><text class="rt" x="41" y="281.6" shape-rendering="auto">0</text><rect x="50" y="264" width="3" height="1" fill="#2e3436"/><rect x="48" y="281" width="5" height="1" fill="#2e3436"/><rect x="50" y="299" width="3" height="1" fill="#2e3436"/><rect x="48" y="316" width="5" height="1" fill="#2e3436"/><rect x="50" y="334" width="3" height="1" fill="#2e3436"/><rect x="48" y="351" width="5" height="1" fill="#2e3436"/><rect x="50" y="369" width="3" height="1" fill="#2e3436"/><rect x="48" y="386" width="5" height="1" fill="#2e3436"/><rect x="50" y="404" width="3" height="1" fill="#2e3436"/><rect x="41" y="421" width="12" height="1" fill="#2e3436"/><text class="rt" x="41" y="429.6" shape-rendering="auto">5</text><text class="rt" x="41" y="438.6" shape-rendering="auto">0</text><text class="rt" x="41" y="447.6" shape-rendering="auto">0</text><rect x="50" y="439" width="3" height="1" fill="#2e3436"/><rect x="48" y="456" width="5" height="1" fill="#2e3436"/><rect x="50" y="474" width="3" height="1" fill="#2e3436"/><rect x="48" y="491" width="5" height="1" fill="#2e3436"/><rect x="50" y="509" width="3" height="1" fill="#2e3436"/><rect x="48" y="526" width="5" height="1" fill="#2e3436"/><rect x="50" y="544" width="3" height="1" fill="#2e3436"/><rect x="48" y="561" width="5" height="1" fill="#2e3436"/><rect x="50" y="579" width="3" height="1" fill="#2e3436"/><rect x="41" y="596" width="12" height="1" fill="#2e3436"/><text class="rt" x="41" y="604.6" shape-rendering="auto">0</text><rect x="50" y="614" width="3" height="1" fill="#2e3436"/><rect x="48" y="631" width="5" height="1" fill="#2e3436"/><rect x="50" y="649" width="3" height="1" fill="#2e3436"/><rect x="48" y="666" width="5" height="1" fill="#2e3436"/><path d="M57 144h8l-4 4z" fill="#2e3436" shape-rendering="auto"/><path d="M49 316v8l4-4z" fill="#2e3436" shape-rendering="auto"/></svg>
<div class="a" style="left:520px;top:327px;width:359px;height:270px;background:#fff;border:1px solid #666;box-shadow:2px 2px 0 #626262"></div>
<div class="a trough" style="left:54px;top:685px;width:1195px;height:13px;border-top:1px solid #a2a4a1"></div>
<div class="a slider" style="left:57px;top:689px;width:1189px;height:6px"></div>
<div class="a trough" style="left:1253px;top:156px;width:13px;height:527px;border-left:1px solid #a2a4a1"></div>
<div class="a slider" style="left:1257px;top:310px;width:6px;height:222px"></div>
<svg class="a" style="left:1254px;top:139px" width="12" height="12" viewBox="0 0 12 12"><path d="M4.2 4.4L6.2 2.4H7.6V9.3H4.6V5.4L3.6 6Z" fill="#fff" stroke="#fff" stroke-width="2.6" stroke-linejoin="round" opacity=".75"/><path d="M4.2 4.4L6.2 2.4H7.6V9.3H4.6V5.4L3.6 6Z" fill="#fff" stroke="#7e817c" stroke-width=".9" stroke-linejoin="round"/></svg>
<svg class="a" style="left:1255px;top:688px" width="8" height="8" viewBox="0 0 8 8"><rect x="2" y="1" width="1" height="1" fill="#20b020"/><rect x="1" y="2" width="1" height="1" fill="#20b020"/><rect x="3" y="2" width="1" height="1" fill="#30a830"/><rect x="2" y="3" width="1" height="1" fill="#40b040"/><rect x="4" y="3" width="1" height="1" fill="#b0b020"/><rect x="1" y="4" width="1" height="1" fill="#20b090"/><rect x="3" y="4" width="1" height="1" fill="#909090"/><rect x="5" y="4" width="1" height="1" fill="#d07020"/><rect x="2" y="5" width="1" height="1" fill="#3080c0"/><rect x="4" y="5" width="1" height="1" fill="#c04060"/><rect x="6" y="5" width="1" height="1" fill="#d02020"/><rect x="1" y="6" width="1" height="1" fill="#2050c0"/><rect x="3" y="6" width="1" height="1" fill="#a030c0"/><rect x="5" y="6" width="1" height="1" fill="#c02070"/><rect x="4" y="2" width="1" height="1" fill="#c8c8c8"/><rect x="5" y="3" width="1" height="1" fill="#c0c0c0"/></svg>
<div class="a" style="left:1275px;top:134px;width:1px;height:567px;background:#9d9d99"></div>
<div class="a btn" style="left:5px;top:139px;width:28px;height:28px"></div>
<div class="a hov" style="left:5px;top:289px;width:28px;height:28px"></div>
<svg class="a" style="left:7px;top:141px" width="24" height="24" viewBox="0 0 24 24"><path d="M5.7 2V19L8.9 16.2L11.4 21.9L15 20.2L12.6 15L17 14.2Z" fill="#000" stroke="#fff" stroke-width="1.8" stroke-linejoin="round" paint-order="stroke"/></svg>
<svg class="a" style="left:7px;top:171px" width="24" height="24" viewBox="0 0 24 24"><path d="M9.7 4.6C13 3.2 16 2.9 20 3M3.6 10C2.8 13 2.8 16 3 20" fill="none" stroke="#333" stroke-width="0.9"/><rect x="3.4" y="3.7" width="5.8" height="5.8" fill="#9a9af0" stroke="#0000ff" stroke-width="1.3"/><path d="M4.5 8.5L8.3 4.6" stroke="#c8c8ff" stroke-width="1.2"/><rect x="19.4" y="1.6" width="3" height="3" fill="#a0a0ff" stroke="#3a3aff" stroke-width="0.8"/><rect x="1.4" y="19.5" width="3" height="3" fill="#a0a0ff" stroke="#3a3aff" stroke-width="0.8"/><path d="M8.9 9.2L21 17L16.2 22.2Z" fill="#000" stroke="#fff" stroke-width="1" stroke-linejoin="round" paint-order="stroke"/></svg>
<svg class="a" style="left:7px;top:201px" width="24" height="24" viewBox="0 0 24 24"><defs><linearGradient id="twg" x1="0" y1="0" x2="0" y2="1"><stop offset="0" stop-color="#333"/><stop offset="0.5" stop-color="#7c7c7c"/><stop offset="1" stop-color="#d0d0d0"/></linearGradient></defs><path d="M1.2 13.2C7 13.2 8 9 9.5 5.5C11 2 14 .9 16.5 1.3C19.5 1.8 20.6 4.5 19.6 6.2C18.8 7.4 17.4 7.2 17.2 6.2C17.6 4.6 16 4 14.8 5C13 6.6 13 9.5 14.2 11.2C15.2 12.6 16.5 13.2 22.6 13.2V21.8H2V13.2Z" fill="url(#twg)"/><path d="M1.2 13.2C7 13.2 8 9 9.5 5.5C11 2 14 .9 16.5 1.3C19.5 1.8 20.6 4.5 19.6 6.2C18.8 7.4 17.4 7.2 17.2 6.2C17.6 4.6 16 4 14.8 5C13 6.6 13 9.5 14.2 11.2C15.2 12.6 16.5 13.2 22.6 13.2" transform="translate(.4 1.25)" fill="none" stroke="#f8f8f8" stroke-width="1.2" stroke-linecap="round"/><path d="M1.2 13.2C7 13.2 8 9 9.5 5.5C11 2 14 .9 16.5 1.3C19.5 1.8 20.6 4.5 19.6 6.2C18.8 7.4 17.4 7.2 17.2 6.2C17.6 4.6 16 4 14.8 5C13 6.6 13 9.5 14.2 11.2C15.2 12.6 16.5 13.2 22.6 13.2" fill="none" stroke="#0c0c0c" stroke-width="1.25" stroke-linecap="round"/></svg>
<svg class="a" style="left:7px;top:231px" width="24" height="24" viewBox="0 0 24 24"><defs><linearGradient id="zmg" x1="0" y1="0" x2="1" y2="1"><stop offset="0" stop-color="#ffffff"/><stop offset="1" stop-color="#a9c6e6"/></linearGradient><linearGradient id="zmh" x1="0" y1="1" x2="1" y2="0"><stop offset="0" stop-color="#f08a00"/><stop offset="1" stop-color="#fdd03a"/></linearGradient></defs><path d="M13.2 13.6L16.6 16.8" stroke="#2a2a2a" stroke-width="3.4"/><path d="M15.6 15.4L20.4 19.6" stroke="#a86400" stroke-width="5.2" stroke-linecap="round"/><path d="M15.8 15.6L20.3 19.5" stroke="url(#zmh)" stroke-width="3.6" stroke-linecap="round"/><path d="M14.8 14.6L16.7 16.5" stroke="#777" stroke-width="3.4"/><circle cx="8.1" cy="8" r="7" fill="url(#zmg)" stroke="#111" stroke-width="1.4"/><path d="M3.4 7.5A4.8 4.8 0 0 1 8 3.2" fill="none" stroke="#fff" stroke-width="1.2" stroke-linecap="round" opacity=".9"/></svg>
<svg class="a" style="left:7px;top:261px" width="24" height="24" viewBox="0 0 24 24"><defs><linearGradient id="msg" x1="0" y1="0" x2="1" y2="1"><stop offset="0" stop-color="#fde9df"/><stop offset="1" stop-color="#efb198"/></linearGradient></defs><path d="M1.4 5.7L10.5 1.3L19.7 17.9L9.8 22.5Z" fill="url(#msg)" stroke="#111" stroke-width="1.3" stroke-linejoin="round"/><path d="M2.6 8L5.4 6.6M4 10.6L6 9.6M5.4 13.1L8.2 11.7M6.8 15.7L8.8 14.7M8.2 18.2L11 16.8M9.4 20.6L11.4 19.6" stroke="#111" stroke-width="1.1"/></svg>
<svg class="a" style="left:7px;top:291px" width="24" height="24" viewBox="0 0 24 24"><defs><linearGradient id="rcg" x1="0" y1="0" x2="1" y2="1"><stop offset="0" stop-color="#f4f8fc"/><stop offset="1" stop-color="#8eb1d8"/></linearGradient></defs><rect x="2.6" y="2.6" width="18.8" height="18.8" fill="#fff" stroke="#000" stroke-width="1.3"/><rect x="4.3" y="4.3" width="15.4" height="15.4" fill="url(#rcg)"/></svg>
<svg class="a" style="left:7px;top:321px" width="24" height="24" viewBox="0 0 24 24"><path d="M3 7L11 2.5L20 6.5V16L12 21L3 17Z" fill="#e4e4e4" stroke="#222" stroke-width="1"/><path d="M3 7L12 11.5L20 6.5M12 11.5V21" fill="none" stroke="#222" stroke-width="1"/><path d="M12 11.5L20 6.5V16L12 21Z" fill="#9a9a9a"/><path d="M3 7L12 11.5V21L3 17Z" fill="#c4c4c4"/></svg>
<svg class="a" style="left:7px;top:351px" width="24" height="24" viewBox="0 0 24 24"><defs><linearGradient id="elg" x1="0" y1="0" x2="0" y2="1"><stop offset="0" stop-color="#fff"/><stop offset="1" stop-color="#f5a0b4"/></linearGradient></defs><circle cx="11.5" cy="12" r="9.7" fill="url(#elg)" stroke="#111" stroke-width="1.2"/></svg>
<svg class="a" style="left:7px;top:381px" width="24" height="24" viewBox="0 0 24 24"><defs><linearGradient id="stg" x1="0" y1="0" x2="1" y2="1"><stop offset="0" stop-color="#fffeee"/><stop offset="1" stop-color="#f4e06c"/></linearGradient></defs><path d="M8.1 1.7L15 6.5L12.8 16.2H3.7L1.5 6.9Z" fill="url(#stg)" stroke="#1c1c1c" stroke-width="1.05" stroke-linejoin="round"/><path d="M15.8 6.1L17.8 11.3L22.7 13.4L19 16.6L18.6 22.3L14.2 18.8L8.1 20.2L9.9 15L6.5 10.5L12.6 10.6Z" fill="url(#stg)" stroke="#1c1c1c" stroke-width="1.05" stroke-linejoin="round"/></svg>
<svg class="a" style="left:7px;top:411px" width="24" height="24" viewBox="0 0 24 24"><path d="M12.0 12.7L12.2 12.9L12.4 13.2L12.5 13.5L12.6 13.9L12.6 14.3L12.5 14.7L12.4 15.1L12.1 15.5L11.8 15.9L11.4 16.2L10.9 16.4L10.3 16.6L9.8 16.6L9.2 16.5L8.5 16.4L7.9 16.1L7.4 15.7L6.9 15.2L6.5 14.6L6.2 13.9L6.0 13.1L6.0 12.3L6.1 11.5L6.3 10.6L6.8 9.9L7.3 9.1L8.0 8.5L8.8 8.0L9.7 7.6L10.7 7.4L11.7 7.4L12.7 7.5L13.8 7.8L14.7 8.3L15.6 9.0L16.4 9.9L17.1 10.9L17.5 12.0L17.8 13.2L17.9 14.4L17.7 15.7L17.3 16.9L16.7 18.1L15.9 19.2L14.9 20.1L13.8 20.9L12.5 21.5L11.0 21.8L9.6 21.9L8.1 21.7L6.6 21.3L5.2 20.6L4.0 19.7L2.8 18.6L1.9 17.2L1.2 15.7L0.8 14.1L0.7 12.4L0.8 10.7L1.3 9.0L2.0 7.4L3.0 6.0L4.3 4.7L5.8 3.6L7.5 2.8L9.3 2.3L11.2 2.0L13.1 2.2L15.1 2.6L16.9 3.4L18.6 4.5L20.1 5.9L21.3 7.6L22.3 9.4L22.9 11.4L23.2 13.6L23.1 15.7L22.6 17.9L21.8 19.9L20.6 21.8" fill="none" stroke="#111" stroke-width="1.05" stroke-linecap="round" stroke-linejoin="round"/></svg>
<svg class="a" style="left:7px;top:441px" width="24" height="24" viewBox="0 0 24 24"><defs><linearGradient id="pcg" x1="0" y1="0" x2="1" y2="0.4"><stop offset="0" stop-color="#fff200"/><stop offset="0.35" stop-color="#ffc81e"/><stop offset="1" stop-color="#f78f00"/></linearGradient><linearGradient id="pcw" x1="0" y1="0" x2="1" y2="0.4"><stop offset="0" stop-color="#fff"/><stop offset="1" stop-color="#f7c46a"/></linearGradient></defs><path d="M1.3 1.7H6.2L1.4 12.1L6.6 11.3C8.4 11 7.3 13.5 6.9 16C6.4 19.5 7.3 22.3 10.2 22.2C11.3 22.1 12 21.6 12.4 21" fill="none" stroke="#3a3a3a" stroke-width="1" stroke-linejoin="round" stroke-linecap="round"/><path d="M14.8 22C17.6 21.6 19.8 19.8 20.6 17.2" fill="none" stroke="#111" stroke-width="1.1" stroke-linecap="round"/><path d="M15 1.2L22.7 6.1L19.4 12.4L11.8 9.7Z" fill="url(#pcg)"/><path d="M11.8 9.7L19.4 12.4L13.6 18.6L11 17.4Z" fill="url(#pcw)"/><path d="M11 17.4L13.6 18.6L10.9 21.2Z" fill="#000"/><path d="M15 1.2L11.8 9.7L10.9 21.2" fill="none" stroke="#222" stroke-width="1"/><path d="M22.7 6.1L19.4 12.4L13.6 18.6" fill="none" stroke="#222" stroke-width=".9"/><path d="M11.8 9.7C14 9 17.5 10.2 19.4 12.4" fill="none" stroke="#d88c1a" stroke-width=".6"/></svg>
<svg class="a" style="left:7px;top:471px" width="24" height="24" viewBox="0 0 24 24"><defs><linearGradient id="png" x1="0" y1="0" x2="1" y2="0.5"><stop offset="0" stop-color="#cfe8f5"/><stop offset="0.5" stop-color="#7fb0d0"/><stop offset="1" stop-color="#2f5f86"/></linearGradient></defs><path d="M1.3 1.3H13.4M1.3 1.3C5 4.5 8 8 9 11.5C10 15 10 19.5 5.8 21.8" fill="none" stroke="#111" stroke-width="1.1"/><path d="M1.3 19.4H4.2V22.1H12.2V21" fill="none" stroke="#000" stroke-width="1.3"/><path d="M15.6 13.6L12.4 20.4M17.2 14.3L14 21" fill="none" stroke="#222" stroke-width="1"/><path d="M16.6 2C18 .6 20.4 1 21.8 2.8C23 4.4 23 6 22.4 7.4L20.2 12.4L13.6 8.8Z" fill="url(#png)" stroke="#1d2f40" stroke-width=".7" stroke-linejoin="round"/><path d="M16.4 3.4C17.4 2.2 18.6 1.8 19.6 2.2" fill="none" stroke="#fff" stroke-width=".9" opacity=".8" stroke-linecap="round"/><path d="M14.3 10.2L18.8 12.8L17.8 14.8L13.9 12.8Z" fill="#f8c535" stroke="#8a5a00" stroke-width=".6" stroke-linejoin="round"/></svg>
<svg class="a" style="left:7px;top:501px" width="24" height="24" viewBox="0 0 24 24"><defs><linearGradient id="clg" x1="0" y1="0" x2="1" y2="0"><stop offset="0" stop-color="#fff6b0"/><stop offset="1" stop-color="#f0b21a"/></linearGradient><linearGradient id="clb" x1="0" y1="0" x2="1" y2="1"><stop offset="0" stop-color="#d6eef7"/><stop offset="1" stop-color="#2e6a98"/></linearGradient></defs><path d="M1.4 1.2C4.5 .9 7.6 1.3 9.2 2.6C9.8 6 7.6 9.5 7.2 14C6.9 17.5 7.6 20.5 8.8 22.4C4.6 21.8 2.4 18 2 14C1.6 9.5 4 5 1.4 1.2Z" fill="#0a0a0a"/><path d="M14.6 22.3C16.5 20.6 19 19 22.7 19.2C20 19.6 17.6 21.2 16 22.4Z" fill="#0a0a0a" stroke="#0a0a0a" stroke-width=".5"/><path d="M15 1.2L22.7 2.9L21 8.3L13.4 5.3Z" fill="url(#clb)"/><path d="M16.4 5.2L21.4 7L20.9 8.4L15.8 6.5Z" fill="#d81e1e"/><path d="M12.2 7.6L15.2 6.3L20.2 8.8C19.6 12 18.6 14.5 17.2 16.4L11 20.4C10 17.5 10 14.5 10.6 12Z" fill="url(#clg)" stroke="#111" stroke-width="1" stroke-linejoin="round"/><circle cx="14.6" cy="12" r="1.1" fill="#111"/><path d="M14.4 12.4L11.3 19.8" stroke="#111" stroke-width=".8"/></svg>
<svg class="a" style="left:7px;top:531px" width="24" height="24" viewBox="0 0 24 24"><text transform="translate(0.6 21) scale(1.06 1)" font-family="Liberation Sans,sans-serif" font-weight="bold" font-size="26" fill="#0c0c0c" stroke="#0c0c0c" stroke-width=".6">A</text><path d="M19.2 1.6H20.6M21.6 1.6H23M21.1 1.8V22.2M19.2 22.4H20.6M21.6 22.4H23" fill="none" stroke="#111" stroke-width=".9"/></svg>
<svg class="a" style="left:7px;top:561px" width="24" height="24" viewBox="0 0 24 24"><defs><linearGradient id="spg" x1="0" y1="0" x2="1" y2="0"><stop offset="0" stop-color="#3d8a08"/><stop offset="0.55" stop-color="#6cc11e"/><stop offset="0.8" stop-color="#d6f5a8"/><stop offset="1" stop-color="#4e9a06"/></linearGradient></defs><circle cx="3.7" cy="2.9" r="1.15" fill="#000"/><circle cx="2.9" cy="6.9" r="1.15" fill="#000"/><circle cx="4.5" cy="11.7" r="1.15" fill="#000"/><circle cx="6.9" cy="4.1" r=".8" fill="#222"/><circle cx="6.6" cy="7.3" r=".8" fill="#222"/><circle cx="6.1" cy="9.7" r=".8" fill="#222"/><circle cx="8.9" cy="5" r=".55" fill="#555"/><circle cx="8.9" cy="8" r=".55" fill="#555"/><circle cx="10.8" cy="6.8" r=".5" fill="#888"/><circle cx="9.8" cy="6.4" r=".4" fill="#777"/><path d="M13.4 8.6V6.6C13.4 5.6 14.2 5.2 15.6 5.2C17 5.2 17.8 5.6 17.8 6.6V8.6Z" fill="#fff" stroke="#111" stroke-width="1"/><path d="M11.2 12.5C11.2 10.5 12.5 9 15.6 9C19 9 21 10.3 22 12.6C22.8 14.5 22.7 19 22.7 22.4C20.5 23 18.5 22.8 16.8 22C15.2 21.2 14 20.2 11.2 19.8Z" fill="url(#spg)" stroke="#111" stroke-width="1.1" stroke-linejoin="round"/><path d="M12.4 9.6C14.5 8.6 17.5 8.8 19 9.8L19 11C17 10.4 14.4 10.4 12.4 11.2Z" fill="#f5c211" stroke="#9a6a00" stroke-width=".4"/></svg>
<svg class="a" style="left:7px;top:591px" width="24" height="24" viewBox="0 0 24 24"><defs><linearGradient id="erg" x1="0.6" y1="0" x2="0.4" y2="1"><stop offset="0" stop-color="#fef3ee"/><stop offset="1" stop-color="#f0ad95"/></linearGradient></defs><path d="M11 1.4L21 6.1L11.4 22.5L2.1 16.9Z" fill="url(#erg)" stroke="#111" stroke-width="1.3" stroke-linejoin="round"/></svg>
<svg class="a" style="left:7px;top:621px" width="24" height="24" viewBox="0 0 24 24"><defs><linearGradient id="bkg" x1="0.3" y1="0" x2="0.7" y2="1"><stop offset="0" stop-color="#c4e6f2"/><stop offset="0.5" stop-color="#6fa3c8"/><stop offset="1" stop-color="#2f5c92"/></linearGradient><linearGradient id="bkp" x1="0" y1="0" x2="0" y2="1"><stop offset="0" stop-color="#2fa04f"/><stop offset="1" stop-color="#b4ecc0"/></linearGradient></defs><path d="M1 21.4C1 20 6 19.6 8.8 19.5C9.4 18.5 9 17 8.6 16L10.6 15.6C10.6 17.2 10.8 18.6 11.8 19.5C15 19.5 21 20 21 21.4C21 22.6 16 23 11 23C6 23 1 22.6 1 21.4Z" fill="url(#bkp)" stroke="#1f7a3a" stroke-width=".9"/><path d="M6.1 4.6V1.3H9.3V3.4" fill="#fff" stroke="#111" stroke-width="1"/><path d="M3.7 6.5L18.2 .9C20.6 3.5 22.2 7 22.7 10.9L9.3 17.4C6 15 4 11 3.7 6.5Z" fill="url(#bkg)" stroke="#111" stroke-width="1.2" stroke-linejoin="round"/><path d="M3.7 6.5C5.6 7.4 9.2 13.4 9.3 17.4C6.4 16 3.6 10 3.7 6.5Z" fill="#5fcc74" stroke="#111" stroke-width=".9" stroke-linejoin="round"/><path d="M7.6 3.2C9.2 5 10.5 8 10.8 10" fill="none" stroke="#111" stroke-width=".9"/><circle cx="10.9" cy="10.6" r="1" fill="#ddd" stroke="#111" stroke-width=".7"/><path d="M12 3.6C14 2.6 16.4 1.8 17.8 1.8" fill="none" stroke="#fff" stroke-width=".9" opacity=".8"/></svg>
<span class="a" style="left:17px;top:670px;border:5px solid transparent;border-right:0;border-left:5.5px solid #2e3436;width:0;height:0"></span>
<svg class="a" style="left:1290px;top:142px" width="24" height="24" viewBox="0 0 24 24"><defs><linearGradient id="nwg" x1="0" y1="0" x2="0.3" y2="1"><stop offset="0" stop-color="#e9e9e7"/><stop offset="0.5" stop-color="#f4f4f3"/><stop offset="1" stop-color="#ffffff"/></linearGradient><radialGradient id="nws" cx=".5" cy=".5" r=".5"><stop offset="0" stop-color="#fff"/><stop offset="0.45" stop-color="#fff8b0"/><stop offset="0.75" stop-color="#f2dc2a"/><stop offset="1" stop-color="#f2dc2a" stop-opacity="0"/></radialGradient></defs><path d="M3.2 23.2H21" stroke="#777" stroke-width="1" opacity=".5"/><rect x="3.6" y="2.7" width="17" height="19.6" rx="1.6" fill="url(#nwg)" stroke="#9c9c99" stroke-width="1"/><circle cx="18.4" cy="8.2" r="6.8" fill="url(#nws)" opacity=".55"/><path d="M18.4 2.6L20.1 5.9L23.7 6.5L21.2 9.1L21.7 12.7L18.4 11.1L15.1 12.7L15.6 9.1L13.1 6.5L16.7 5.9Z" fill="#fffff4" stroke="#ecd41c" stroke-width="1.7" stroke-linejoin="round"/></svg>
<svg class="a" style="left:1290px;top:177px" width="24" height="24" viewBox="0 0 24 24"><defs><linearGradient id="opb" x1="0" y1="0" x2="0" y2="1"><stop offset="0" stop-color="#9a7a48"/><stop offset="1" stop-color="#7a5c30"/></linearGradient><linearGradient id="opf" x1="0" y1="0" x2="0" y2="1"><stop offset="0" stop-color="#d8c7a6"/><stop offset="1" stop-color="#b7a07a"/></linearGradient></defs><path d="M4.4 15.5V4.2C4.4 3.6 4.8 3.2 5.4 3.2H11.2L13 5.2H20.6C21.2 5.2 21.6 5.6 21.6 6.2V15.5Z" fill="url(#opb)" stroke="#6a4a1e" stroke-width="1" stroke-linejoin="round"/><rect x="8.2" y="7.2" width="12" height="9" fill="#fff" stroke="#444" stroke-width="1"/><path d="M10.4 9.6H18M10.4 11.8H18" stroke="#b0b2ae" stroke-width=".9"/><path d="M2.4 14.6L9 14.4L10.4 13.6H23.6C24.2 13.6 24.2 14 24 14.6L22.6 20.2C22.4 20.8 22 21 21.4 21H4.8C4.2 21 3.8 20.8 3.6 20.2Z" fill="url(#opf)" stroke="#7a5c30" stroke-width="1" stroke-linejoin="round"/></svg>
<svg class="a" style="left:1290px;top:211px" width="24" height="24" viewBox="0 0 24 24"><defs><linearGradient id="svg1" x1="0" y1="0" x2="0" y2="1"><stop offset="0" stop-color="#e4e4e2"/><stop offset="1" stop-color="#cfcfcd"/></linearGradient><linearGradient id="svg2" x1="0" y1="0" x2="1" y2="0"><stop offset="0" stop-color="#5aa80e"/><stop offset="0.5" stop-color="#9ae83c"/><stop offset="1" stop-color="#5aa80e"/></linearGradient></defs><path d="M4 22.6H22" stroke="#777" stroke-width="1" opacity=".4"/><path d="M4.4 21.8V6C4.4 3.6 5.8 2.6 7.6 2.6H18.4C20.2 2.6 21.6 3.6 21.6 6V21.8Z" fill="url(#svg1)" stroke="#a2a2a0" stroke-width="1"/><rect x="6.6" y="5.4" width="12.8" height="7.6" fill="#c4c4c2" stroke="#aaa" stroke-width=".6"/><rect x="6.4" y="14.6" width="13.2" height="6.6" rx=".8" fill="#e6e6e4" stroke="#6e6e6c" stroke-width="1"/><path d="M10 16.4V18.4H16V16.4" fill="#fff" stroke="#8a8a88" stroke-width="1"/><path d="M11.4 1.2H14.6V9.4H18.6L13 14.8L7.4 9.4H11.4Z" fill="url(#svg2)" stroke="#4e9a06" stroke-width="1" stroke-linejoin="round"/></svg>
<svg class="a" style="left:1290px;top:246px" width="24" height="24" viewBox="0 0 24 24"><defs><linearGradient id="prg" x1="0" y1="0" x2="0" y2="1"><stop offset="0" stop-color="#c9c9c7"/><stop offset="0.35" stop-color="#fdfdfd"/><stop offset="1" stop-color="#b4b4b2"/></linearGradient></defs><path d="M4.6 3.2H21.4C22.4 3.2 23 3.8 23.2 4.8L24 12.4C24 13.6 23.4 14.2 22.4 14.2H3.6C2.6 14.2 2 13.6 2 12.4L2.8 4.8C3 3.8 3.6 3.2 4.6 3.2Z" fill="url(#prg)" stroke="#2e2e2e" stroke-width="1.1"/><rect x="7.2" y="4.9" width="11.8" height="2.6" rx=".6" fill="#3a3a3a"/><path d="M8.6 6.2H9.6M10.8 6.2H11.8M13 6.2H14" stroke="#999" stroke-width="1"/><path d="M4 13.4H22V20.2C22 20.8 21.6 21.2 21 21.2H5C4.4 21.2 4 20.8 4 20.2Z" fill="#1c1c1c"/><path d="M7.4 12.4H18.8L19.4 19H6.8Z" fill="#fdfdfd" stroke="#555" stroke-width=".6"/><path d="M9 14.4C11 14 13 15.4 15 16.6M10.6 13.8C12.6 14.4 14.6 16 16.8 17.4" stroke="#7cc46a" stroke-width="1" fill="none"/><rect x="16" y="17.4" width="2" height="1" fill="#3a7de0"/><path d="M4.4 21H21.6" stroke="#555" stroke-width=".8"/></svg>
<div class="a" style="left:1292px;top:279px;width:20px;height:1px;background:#d0d0ce"></div>
<svg class="a" style="left:1290px;top:291px" width="24" height="24" viewBox="0 0 24 24"><defs><linearGradient id="img" x1="0" y1="0" x2="1" y2="1"><stop offset="0" stop-color="#ffffff"/><stop offset="1" stop-color="#cfcfcc"/></linearGradient></defs><path d="M9.4 3.6H17.8L21.6 7.4V20.4H9.4Z" fill="url(#img)" stroke="#111" stroke-width="1.1" stroke-linejoin="round"/><path d="M17.8 3.6V7.4H21.6" fill="#fff" stroke="#111" stroke-width=".9" stroke-linejoin="round"/><path d="M4 12H12" stroke="#111" stroke-width="1.3"/><path d="M11.6 9V15L15.6 12Z" fill="#111"/></svg>
<svg class="a" style="left:1290px;top:325px" width="24" height="24" viewBox="0 0 24 24"><defs><linearGradient id="exg" x1="0" y1="0" x2="1" y2="1"><stop offset="0" stop-color="#ffffff"/><stop offset="1" stop-color="#cfcfcc"/></linearGradient></defs><path d="M4.6 3.6H13.6L17.6 7.6V20.4H4.6Z" fill="url(#exg)" stroke="#111" stroke-width="1.1" stroke-linejoin="round"/><path d="M13.6 3.6V7.6H17.6" fill="#fff" stroke="#111" stroke-width=".9" stroke-linejoin="round"/><path d="M11.2 12.4H19" stroke="#111" stroke-width="1.3"/><path d="M18.2 9.4V15.4L22.2 12.4Z" fill="#111"/></svg>
<div class="a" style="left:1292px;top:359px;width:20px;height:1px;background:#d0d0ce"></div>
<svg class="a" style="left:1290px;top:371px" width="24" height="24" viewBox="0 0 24 24"><defs><linearGradient id="udg" x1="0" y1="0" x2="0" y2="1"><stop offset="0" stop-color="#fffbd0"/><stop offset="0.5" stop-color="#fce94f"/><stop offset="1" stop-color="#f0d020"/></linearGradient></defs><path d="M2.4 9.5L10.6 3.4V7H17.6C21.4 7 23.8 9.6 23.8 13C23.8 16.6 21 19.6 15.6 19.2L15.4 17C18.6 17 19.8 15.4 19.8 13.4C19.8 11.8 18.6 11.4 17.2 11.4H10.6V15.2Z" fill="url(#udg)" stroke="#c4a000" stroke-width="1.1" stroke-linejoin="round"/><path d="M4.4 9.4L9.6 5.6V8.2H17.6C20.6 8.2 22.4 10.2 22.6 12.6" fill="none" stroke="#fffef0" stroke-width=".9" opacity=".9"/></svg>
<svg class="a" style="left:1290px;top:405px" width="24" height="24" viewBox="0 0 24 24"><defs><pattern id="ckpr" width="2" height="2" patternUnits="userSpaceOnUse"><rect width="2" height="2" fill="#000"/><rect width="1" height="1" fill="#fff" shape-rendering="crispEdges"/><rect x="1" y="1" width="1" height="1" fill="#fff" shape-rendering="crispEdges"/></pattern><mask id="ckmr" maskUnits="userSpaceOnUse" x="0" y="0" width="24" height="24"><rect width="24" height="24" fill="url(#ckpr)"/></mask><filter id="ckwr" x="0" y="0" width="1" height="1"><feColorMatrix values="0 0 0 0 1  0 0 0 0 1  0 0 0 0 1  0 0 0 1 0"/></filter><linearGradient id="rdg" x1="0" y1="0" x2="0" y2="1"><stop offset="0" stop-color="#7cc030"/><stop offset="1" stop-color="#3f8a04"/></linearGradient></defs><g filter="url(#ckwr)" opacity=".8"><path d="M23.8 9.2L15.8 3V6.8H8.6C4.6 6.8 2 9.4 2 12.8C2 16.4 4.8 19.6 10.2 19.2L10.4 17C7.2 17 6 15.4 6 13.4C6 11.8 7.2 11.2 8.8 11.2H15.8V15.4Z" fill="url(#rdg)" stroke="#2f6a04" stroke-width="1.1" stroke-linejoin="round"/></g><g mask="url(#ckmr)"><path d="M23.8 9.2L15.8 3V6.8H8.6C4.6 6.8 2 9.4 2 12.8C2 16.4 4.8 19.6 10.2 19.2L10.4 17C7.2 17 6 15.4 6 13.4C6 11.8 7.2 11.2 8.8 11.2H15.8V15.4Z" fill="url(#rdg)" stroke="#2f6a04" stroke-width="1.1" stroke-linejoin="round"/></g></svg>
<div class="a" style="left:1292px;top:439px;width:20px;height:1px;background:#d0d0ce"></div>
<svg class="a" style="left:1290px;top:451px" width="24" height="24" viewBox="0 0 24 24"><rect x="10.7" y="9.6" width="11.8" height="11.6" fill="#fdfdfd" stroke="#7c7c7a" stroke-width="1"/><path d="M21.5 11.1V20.2H12.2" fill="none" stroke="#c8c8c6" stroke-width="1"/><path d="M13.4 12.5H19.8" stroke="#a4a6a2" stroke-width="1"/><path d="M13.4 14.4H19.8" stroke="#a4a6a2" stroke-width="1"/><path d="M13.4 16.3H19.8" stroke="#a4a6a2" stroke-width="1"/><path d="M13.4 18.2H16.6" stroke="#a4a6a2" stroke-width="1"/><rect x="3.6" y="2.8" width="11.8" height="11.4" fill="#fdfdfd" stroke="#7c7c7a" stroke-width="1"/><path d="M14.4 4.3V13.2H5.1" fill="none" stroke="#c8c8c6" stroke-width="1"/><path d="M6.3 5.7H12.7" stroke="#a4a6a2" stroke-width="1"/><path d="M6.3 7.6H12.7" stroke="#a4a6a2" stroke-width="1"/><path d="M6.3 9.5H12.7" stroke="#a4a6a2" stroke-width="1"/><path d="M6.3 11.4H9.5" stroke="#a4a6a2" stroke-width="1"/></svg>
<svg class="a" style="left:1290px;top:485px" width="24" height="24" viewBox="0 0 24 24"><path d="M6.9 1.1C5.2 3.6 6 6.4 7.6 8.8L12.4 15.6L14.4 13.2Z" fill="#f6f6f4" stroke="#888a85" stroke-width=".8" stroke-linejoin="round"/><path d="M20.3 1.1C22 3.6 21.2 6.4 19.6 8.8L14.8 15.6L12.8 13.2Z" fill="#e6e6e4" stroke="#888a85" stroke-width=".8" stroke-linejoin="round"/><circle cx="9" cy="18" r="3" fill="#e8e8e7" stroke="#cc0000" stroke-width="2.3"/><circle cx="9" cy="18" r="3" fill="none" stroke="#ef7a7a" stroke-width=".6"/><circle cx="17.9" cy="18" r="3" fill="#e8e8e7" stroke="#cc0000" stroke-width="2.3"/><circle cx="17.9" cy="18" r="3" fill="none" stroke="#ef7a7a" stroke-width=".6"/><path d="M5 22.4H22" stroke="#888" stroke-width="1" opacity=".25"/></svg>
<svg class="a" style="left:1290px;top:519px" width="24" height="24" viewBox="0 0 24 24"><defs><linearGradient id="psg" x1="0" y1="0" x2="1" y2="0"><stop offset="0" stop-color="#d99a3e"/><stop offset="0.3" stop-color="#e9b96e"/><stop offset="1" stop-color="#dca552"/></linearGradient></defs><path d="M3.6 22H21" stroke="#777" stroke-width="1" opacity=".4"/><rect x="4.3" y="3.4" width="16.6" height="17.6" rx="1.6" fill="url(#psg)" stroke="#b37514" stroke-width="1"/><path d="M8.2 6.6V4.6H9.4V2.6C9.4 1.8 9.8 1.5 10.6 1.5H14.6C15.4 1.5 15.8 1.8 15.8 2.6V4.6H17V6.6Z" fill="#eeeeec" stroke="#666864" stroke-width=".9" stroke-linejoin="round"/><rect x="11.8" y="9.6" width="11.8" height="11.6" fill="#fdfdfd" stroke="#7c7c7a" stroke-width="1"/><path d="M22.6 11.1V20.2H13.3" fill="none" stroke="#c8c8c6" stroke-width="1"/><path d="M14.5 12.5H20.9" stroke="#a4a6a2" stroke-width="1"/><path d="M14.5 14.4H20.9" stroke="#a4a6a2" stroke-width="1"/><path d="M14.5 16.3H20.9" stroke="#a4a6a2" stroke-width="1"/><path d="M14.5 18.2H17.7" stroke="#a4a6a2" stroke-width="1"/></svg>
<div class="a" style="left:1292px;top:553px;width:20px;height:1px;background:#d0d0ce"></div>
<svg class="a" style="left:1290px;top:564px" width="24" height="24" viewBox="0 0 24 24"><defs><radialGradient id="zs1" cx=".5" cy=".4" r=".6"><stop offset="0" stop-color="#f4f8fd"/><stop offset="1" stop-color="#b4cdec"/></radialGradient></defs><path d="M18 16.9L21.2 19.9" stroke="#111" stroke-width="2.8" stroke-linecap="square"/><circle cx="13" cy="11.9" r="7.7" fill="url(#zs1)" stroke="#111" stroke-width="1.4"/><rect x="8" y="8.3" width="10" height="7.2" fill="#fff" stroke="#111" stroke-width="1.1" stroke-dasharray="1.6 1"/></svg>
<svg class="a" style="left:1290px;top:598px" width="24" height="24" viewBox="0 0 24 24"><defs><radialGradient id="zs2" cx=".5" cy=".4" r=".6"><stop offset="0" stop-color="#f4f8fd"/><stop offset="1" stop-color="#b4cdec"/></radialGradient></defs><path d="M18 17.4L21.2 20.4" stroke="#111" stroke-width="2.8" stroke-linecap="square"/><circle cx="13" cy="12.4" r="7.7" fill="url(#zs2)" stroke="#111" stroke-width="1.4"/><rect x="8.3" y="8.8" width="5.2" height="4.8" fill="#f2c832" stroke="#333" stroke-width=".9"/><rect x="12" y="12" width="5.6" height="4.8" fill="#fae070" stroke="#333" stroke-width=".9"/><path d="M13 13H16.6V14" stroke="#fff8c0" stroke-width=".8" fill="none"/><path d="M9.2 9.8H12.4" stroke="#fff0a0" stroke-width=".8"/></svg>
<svg class="a" style="left:1290px;top:632px" width="24" height="24" viewBox="0 0 24 24"><defs><linearGradient id="zpg" x1="0" y1="0" x2="1" y2="1"><stop offset="0" stop-color="#ffffff"/><stop offset="1" stop-color="#b8b8b6"/></linearGradient></defs><defs><radialGradient id="zs3" cx=".5" cy=".4" r=".6"><stop offset="0" stop-color="#f4f8fd"/><stop offset="1" stop-color="#b4cdec"/></radialGradient></defs><path d="M18 16.8L21.2 19.8" stroke="#111" stroke-width="2.8" stroke-linecap="square"/><circle cx="13" cy="11.8" r="7.7" fill="url(#zs3)" stroke="#111" stroke-width="1.4"/><rect x="9.9" y="7.6" width="6.2" height="8.6" fill="url(#zpg)" stroke="#1a1a1a" stroke-width="1.1"/></svg>
<div class="a btn" style="left:1329px;top:139px;width:32px;height:32px"></div>
<svg class="a" style="left:1333px;top:143px" width="24" height="24" viewBox="0 0 24 24"><path d="M8 8.4L14 14.2" stroke="#000" stroke-width="1.5"/><path d="M15.6 15.8L10.6 14.8L14.6 10.8Z" fill="#000"/><path d="M5.9 2.9L9 6L5.9 9.1L2.8 6Z" fill="#b4b4ee" stroke="#0000ff" stroke-width="1.3"/><path d="M17.2 14.3L20.3 17.4L17.2 20.5L14.1 17.4Z" fill="#b4b4ee" stroke="#008000" stroke-width="1.3"/></svg>
<div class="a" style="left:1334px;top:177px;width:20px;height:1px;background:#d0d0ce"></div>
<svg class="a" style="left:1333px;top:189px" width="24" height="24" viewBox="0 0 24 24"><path d="M8 8.4L14 14.2" stroke="#000" stroke-width="1.5"/><path d="M15.6 15.8L10.6 14.8L14.6 10.8Z" fill="#000"/><path d="M5.9 2.9L9 6L5.9 9.1L2.8 6Z" fill="#b4b4ee" stroke="#0000ff" stroke-width="1.3"/><path d="M17.2 14.3L20.3 17.4L17.2 20.5L14.1 17.4Z" fill="#b4b4ee" stroke="#008000" stroke-width="1.3"/></svg>
<svg class="a" style="left:1333px;top:222px" width="24" height="24" viewBox="0 0 24 24"><path d="M18.5 4.5V19.3H4.4" stroke="#0a6a0a" stroke-width="1.1" stroke-dasharray="1.2 1" fill="none"/></svg>
<svg class="a" style="left:1333px;top:256px" width="24" height="24" viewBox="0 0 24 24"><path d="M17.8 4.5V16M15 19.3H3" stroke="#222" stroke-width="1.1" stroke-dasharray="1.2 1" fill="none"/><defs><pattern id="ckpi" width="2" height="2" patternUnits="userSpaceOnUse"><rect width="2" height="2" fill="#000"/><rect width="1" height="1" fill="#fff" shape-rendering="crispEdges"/><rect x="1" y="1" width="1" height="1" fill="#fff" shape-rendering="crispEdges"/></pattern><mask id="ckmi" maskUnits="userSpaceOnUse" x="0" y="0" width="24" height="24"><rect width="24" height="24" fill="url(#ckpi)"/></mask><filter id="ckwi" x="0" y="0" width="1" height="1"><feColorMatrix values="0 0 0 0 1  0 0 0 0 1  0 0 0 0 1  0 0 0 1 0"/></filter></defs><g filter="url(#ckwi)" opacity=".8"><path d="M17.8 16.8L20.3 19.3L17.8 21.8L15.3 19.3Z" fill="#9090c8" stroke="#006000" stroke-width="1.3"/></g><g mask="url(#ckmi)"><path d="M17.8 16.8L20.3 19.3L17.8 21.8L15.3 19.3Z" fill="#9090c8" stroke="#006000" stroke-width="1.3"/></g></svg>
<svg class="a" style="left:1333px;top:290px" width="24" height="24" viewBox="0 0 24 24"><path d="M17.2 12V18.3H3" stroke="#222" stroke-width="1.1" stroke-dasharray="1.2 1" fill="none"/><defs><pattern id="ckpj" width="2" height="2" patternUnits="userSpaceOnUse"><rect width="2" height="2" fill="#000"/><rect width="1" height="1" fill="#fff" shape-rendering="crispEdges"/><rect x="1" y="1" width="1" height="1" fill="#fff" shape-rendering="crispEdges"/></pattern><mask id="ckmj" maskUnits="userSpaceOnUse" x="0" y="0" width="24" height="24"><rect width="24" height="24" fill="url(#ckpj)"/></mask><filter id="ckwj" x="0" y="0" width="1" height="1"><feColorMatrix values="0 0 0 0 1  0 0 0 0 1  0 0 0 0 1  0 0 0 1 0"/></filter></defs><g filter="url(#ckwj)" opacity=".8"><path d="M17.2 6.3L19.7 8.8L17.2 11.3L14.7 8.8Z" fill="#9090c8" stroke="#006000" stroke-width="1.3"/></g><g mask="url(#ckmj)"><path d="M17.2 6.3L19.7 8.8L17.2 11.3L14.7 8.8Z" fill="#9090c8" stroke="#006000" stroke-width="1.3"/></g></svg>
<svg class="a" style="left:1333px;top:324px" width="24" height="24" viewBox="0 0 24 24"><path d="M17.6 4.8V18.6H4" stroke="#111" stroke-width="1.1" stroke-dasharray="1.2 1" fill="none"/><defs><pattern id="ckpk" width="2" height="2" patternUnits="userSpaceOnUse"><rect width="2" height="2" fill="#000"/><rect width="1" height="1" fill="#fff" shape-rendering="crispEdges"/><rect x="1" y="1" width="1" height="1" fill="#fff" shape-rendering="crispEdges"/></pattern><mask id="ckmk" maskUnits="userSpaceOnUse" x="0" y="0" width="24" height="24"><rect width="24" height="24" fill="url(#ckpk)"/></mask><filter id="ckwk" x="0" y="0" width="1" height="1"><feColorMatrix values="0 0 0 0 1  0 0 0 0 1  0 0 0 0 1  0 0 0 1 0"/></filter></defs><g filter="url(#ckwk)" opacity=".8"><circle cx="7.6" cy="9" r="1.9" fill="#c0c0e8" stroke="#008000" stroke-width="1.3"/></g><g mask="url(#ckmk)"><circle cx="7.6" cy="9" r="1.9" fill="#c0c0e8" stroke="#008000" stroke-width="1.3"/></g></svg>
<div class="a" style="left:1334px;top:359px;width:20px;height:1px;background:#d0d0ce"></div>
<div class="a btn" style="left:1329px;top:367px;width:32px;height:32px"></div>
<svg class="a" style="left:1333px;top:371px" width="24" height="24" viewBox="0 0 24 24"><path d="M8 8.4L14 14.2" stroke="#000" stroke-width="1.5"/><path d="M15.6 15.8L10.6 14.8L14.6 10.8Z" fill="#000"/><path d="M5.9 2.9L9 6L5.9 9.1L2.8 6Z" fill="#b4b4ee" stroke="#0000ff" stroke-width="1.3"/><path d="M17.2 14.3L20.3 17.4L17.2 20.5L14.1 17.4Z" fill="#b4b4ee" stroke="#008000" stroke-width="1.3"/></svg>
<svg class="a" style="left:1333px;top:404px" width="24" height="24" viewBox="0 0 24 24"><path d="M3.9 5.7C11 6 17.5 12 12.6 19.3C17 19 20 16.4 20.3 13.4" fill="none" stroke="#008000" stroke-width="1.6" stroke-linecap="round" stroke-linejoin="round"/></svg>
<svg class="a" style="left:1333px;top:438px" width="24" height="24" viewBox="0 0 24 24"><path d="M3.9 20.9L20.3 4.5M3.9 15L20.3 10.1" stroke="#333" stroke-width="1"/><circle cx="12.3" cy="12.7" r="2.3" fill="#7878d0" stroke="#008000" stroke-width="1.3"/></svg>
<svg class="a" style="left:1333px;top:472px" width="24" height="24" viewBox="0 0 24 24"><path d="M3.2 4.5C10 5 16.5 10 14 17.2C17 16.5 19.3 14.5 19.6 12.2" fill="none" stroke="#444" stroke-width="1"/><path d="M11.5 15.3L14.6 18.4L11.5 21.5L8.4 18.4Z" fill="#8888d8" stroke="#008000" stroke-width="1.3"/></svg>
<svg class="a" style="left:1333px;top:506px" width="24" height="24" viewBox="0 0 24 24"><path d="M3.2 4.4C6 5 9 6.5 11.5 7.6C14.5 9 15.2 13 11.7 18.3C15 17.8 19 16 19.6 12.1" fill="none" stroke="#444" stroke-width="1"/><rect x="9.1" y="5.2" width="4.8" height="4.8" fill="#8888d8" stroke="#008000" stroke-width="1.3"/></svg>
<svg class="a" style="left:1333px;top:540px" width="24" height="24" viewBox="0 0 24 24"><path d="M3.5 21.6L20.3 5.1" stroke="#333" stroke-width="1"/><path d="M6 19.6L8 14.6M8 20.2L10 15.2M14.4 11L16.4 5.6M16.4 11.6L18.4 6.2" stroke="#cc0000" stroke-width="1.2"/><circle cx="11.9" cy="13.6" r="2.3" fill="#7878d0" stroke="#008000" stroke-width="1.3"/></svg>
<div class="a" style="left:1334px;top:575px;width:20px;height:1px;background:#d0d0ce"></div>
<div class="a btn" style="left:1329px;top:583px;width:32px;height:32px"></div>
<svg class="a" style="left:1333px;top:587px" width="24" height="24" viewBox="0 0 24 24"><path d="M8 8.4L14 14.2" stroke="#000" stroke-width="1.5"/><path d="M15.6 15.8L10.6 14.8L14.6 10.8Z" fill="#000"/><path d="M5.9 2.9L9 6L5.9 9.1L2.8 6Z" fill="#b4b4ee" stroke="#0000ff" stroke-width="1.3"/><path d="M17.2 14.3L20.3 17.4L17.2 20.5L14.1 17.4Z" fill="#b4b4ee" stroke="#008000" stroke-width="1.3"/></svg>
<svg class="a" style="left:1333px;top:621px" width="24" height="24" viewBox="0 0 24 24"><path d="M17.6 2.8V17.4" stroke="#555" stroke-width="1"/><path d="M3 17H18.1" stroke="#7a7a78" stroke-width="1.8"/><circle cx="9.4" cy="8.9" r="2.2" fill="#c0c0f0" stroke="#008000" stroke-width="1.3"/></svg>
<span class="a" style="left:1301px;top:670px;border:5px solid transparent;border-right:0;border-left:5.5px solid #2e3436;width:0;height:0"></span>
<span class="a" style="left:1343px;top:670px;border:5px solid transparent;border-right:0;border-left:5.5px solid #2e3436;width:0;height:0"></span>
<div class="a" style="left:0;top:702px;width:1353px;height:16px;overflow:hidden">
<svg class="a" style="left:0;top:0" width="17" height="16" viewBox="0 0 17 16"><rect x="1" width="16" height="16" fill="#fff"/><path d="M1.5 .5L16.5 15.5M16.5 .5L1.5 15.5" stroke="#7a0808" stroke-width="1.7"/></svg>
<i class="a" style="left:17px;top:0;width:16px;height:16px;background:#000000"></i>
<i class="a" style="left:33px;top:0;width:16px;height:16px;background:#1a1a1a"></i>
<i class="a" style="left:49px;top:0;width:16px;height:16px;background:#333333"></i>
<i class="a" style="left:65px;top:0;width:16px;height:16px;background:#4d4d4d"></i>
<i class="a" style="left:81px;top:0;width:16px;height:16px;background:#666666"></i>
<i class="a" style="left:97px;top:0;width:16px;height:16px;background:#808080"></i>
<i class="a" style="left:113px;top:0;width:16px;height:16px;background:#999999"></i>
<i class="a" style="left:129px;top:0;width:16px;height:16px;background:#b3b3b3"></i>
<i class="a" style="left:145px;top:0;width:16px;height:16px;background:#cccccc"></i>
<i class="a" style="left:161px;top:0;width:16px;height:16px;background:#e6e6e6"></i>
<i class="a" style="left:177px;top:0;width:16px;height:16px;background:#ececec"></i>
<i class="a" style="left:193px;top:0;width:16px;height:16px;background:#f2f2f2"></i>
<i class="a" style="left:209px;top:0;width:16px;height:16px;background:#f9f9f9"></i>
<i class="a" style="left:225px;top:0;width:16px;height:16px;background:#ffffff"></i>
<i class="a" style="left:241px;top:0;width:16px;height:16px;background:#800000"></i>
<i class="a" style="left:257px;top:0;width:16px;height:16px;background:#ff0000"></i>
<i class="a" style="left:273px;top:0;width:16px;height:16px;background:#808000"></i>
<i class="a" style="left:289px;top:0;width:16px;height:16px;background:#ffff00"></i>
<i class="a" style="left:305px;top:0;width:16px;height:16px;background:#008000"></i>
<i class="a" style="left:321px;top:0;width:16px;height:16px;background:#00ff00"></i>
<i class="a" style="left:337px;top:0;width:16px;height:16px;background:#008080"></i>
<i class="a" style="left:353px;top:0;width:16px;height:16px;background:#00ffff"></i>
<i class="a" style="left:369px;top:0;width:16px;height:16px;background:#000080"></i>
<i class="a" style="left:385px;top:0;width:16px;height:16px;background:#0000ff"></i>
<i class="a" style="left:401px;top:0;width:16px;height:16px;background:#800080"></i>
<i class="a" style="left:417px;top:0;width:16px;height:16px;background:#ff00ff"></i>
<i class="a" style="left:433px;top:0;width:16px;height:16px;background:#2b0000"></i>
<i class="a" style="left:449px;top:0;width:16px;height:16px;background:#550000"></i>
<i class="a" style="left:465px;top:0;width:16px;height:16px;background:#800000"></i>
<i class="a" style="left:481px;top:0;width:16px;height:16px;background:#aa0000"></i>
<i class="a" style="left:497px;top:0;width:16px;height:16px;background:#d40000"></i>
<i class="a" style="left:513px;top:0;width:16px;height:16px;background:#ff0000"></i>
<i class="a" style="left:529px;top:0;width:16px;height:16px;background:#ff2a2a"></i>
<i class="a" style="left:545px;top:0;width:16px;height:16px;background:#ff5555"></i>
<i class="a" style="left:561px;top:0;width:16px;height:16px;background:#ff8080"></i>
<i class="a" style="left:577px;top:0;width:16px;height:16px;background:#ffaaaa"></i>
<i class="a" style="left:593px;top:0;width:16px;height:16px;background:#ffd5d5"></i>
<i class="a" style="left:609px;top:0;width:16px;height:16px;background:#280b0b"></i>
<i class="a" style="left:625px;top:0;width:16px;height:16px;background:#501616"></i>
<i class="a" style="left:641px;top:0;width:16px;height:16px;background:#782121"></i>
<i class="a" style="left:657px;top:0;width:16px;height:16px;background:#a02c2c"></i>
<i class="a" style="left:673px;top:0;width:16px;height:16px;background:#c83737"></i>
<i class="a" style="left:689px;top:0;width:16px;height:16px;background:#d35f5f"></i>
<i class="a" style="left:705px;top:0;width:16px;height:16px;background:#de8787"></i>
<i class="a" style="left:721px;top:0;width:16px;height:16px;background:#e9afaf"></i>
<i class="a" style="left:737px;top:0;width:16px;height:16px;background:#f4d7d7"></i>
<i class="a" style="left:753px;top:0;width:16px;height:16px;background:#241c1c"></i>
<i class="a" style="left:769px;top:0;width:16px;height:16px;background:#483737"></i>
<i class="a" style="left:785px;top:0;width:16px;height:16px;background:#6c5353"></i>
<i class="a" style="left:801px;top:0;width:16px;height:16px;background:#916f6f"></i>
<i class="a" style="left:817px;top:0;width:16px;height:16px;background:#ac9393"></i>
<i class="a" style="left:833px;top:0;width:16px;height:16px;background:#c8b7b7"></i>
<i class="a" style="left:849px;top:0;width:16px;height:16px;background:#e3dbdb"></i>
<i class="a" style="left:865px;top:0;width:16px;height:16px;background:#2b1100"></i>
<i class="a" style="left:881px;top:0;width:16px;height:16px;background:#552200"></i>
<i class="a" style="left:897px;top:0;width:16px;height:16px;background:#803300"></i>
<i class="a" style="left:913px;top:0;width:16px;height:16px;background:#aa4400"></i>
<i class="a" style="left:929px;top:0;width:16px;height:16px;background:#d45500"></i>
<i class="a" style="left:945px;top:0;width:16px;height:16px;background:#ff6600"></i>
<i class="a" style="left:961px;top:0;width:16px;height:16px;background:#ff7f2a"></i>
<i class="a" style="left:977px;top:0;width:16px;height:16px;background:#ff9955"></i>
<i class="a" style="left:993px;top:0;width:16px;height:16px;background:#ffb380"></i>
<i class="a" style="left:1009px;top:0;width:16px;height:16px;background:#ffccaa"></i>
<i class="a" style="left:1025px;top:0;width:16px;height:16px;background:#ffe6d5"></i>
<i class="a" style="left:1041px;top:0;width:16px;height:16px;background:#28170b"></i>
<i class="a" style="left:1057px;top:0;width:16px;height:16px;background:#502d16"></i>
<i class="a" style="left:1073px;top:0;width:16px;height:16px;background:#784421"></i>
<i class="a" style="left:1089px;top:0;width:16px;height:16px;background:#a05a2c"></i>
<i class="a" style="left:1105px;top:0;width:16px;height:16px;background:#c87137"></i>
<i class="a" style="left:1121px;top:0;width:16px;height:16px;background:#d38d5f"></i>
<i class="a" style="left:1137px;top:0;width:16px;height:16px;background:#deaa87"></i>
<i class="a" style="left:1153px;top:0;width:16px;height:16px;background:#e9c6af"></i>
<i class="a" style="left:1169px;top:0;width:16px;height:16px;background:#f4e3d7"></i>
<i class="a" style="left:1185px;top:0;width:16px;height:16px;background:#241f1c"></i>
<i class="a" style="left:1201px;top:0;width:16px;height:16px;background:#483e37"></i>
<i class="a" style="left:1217px;top:0;width:16px;height:16px;background:#6c5d53"></i>
<i class="a" style="left:1233px;top:0;width:16px;height:16px;background:#917c6f"></i>
<i class="a" style="left:1249px;top:0;width:16px;height:16px;background:#ac9d93"></i>
<i class="a" style="left:1265px;top:0;width:16px;height:16px;background:#c8beb7"></i>
<i class="a" style="left:1281px;top:0;width:16px;height:16px;background:#e3dedb"></i>
<i class="a" style="left:1297px;top:0;width:16px;height:16px;background:#2b2200"></i>
<i class="a" style="left:1313px;top:0;width:16px;height:16px;background:#554400"></i>
<i class="a" style="left:1329px;top:0;width:16px;height:16px;background:#806600"></i>
<i class="a" style="left:1345px;top:0;width:16px;height:16px;background:#aa8800"></i>
</div>
<span class="a" style="left:1357px;top:702px;border:5.5px solid transparent;border-left:0;border-right:5.5px solid #2e3436;width:0;height:0"></span>
<div class="a" style="left:0;top:718px;width:1354px;height:2px;background:#f5f5f4"></div>
<div class="a trough" style="left:0;top:720px;width:1354px;height:13px;border-top:1px solid #a2a4a1"></div>
<div class="a slider" style="left:3px;top:724px;width:258px;height:6px"></div>
<span class="a st" style="left:2px;top:735px">Fill:</span><span class="a st" style="left:2px;top:751px">Stroke:</span>
<span class="a st" style="left:72px;top:735px">N/A</span><span class="a st" style="left:72px;top:751px">N/A</span>
<span class="a st" style="left:126px;top:743px">O:</span>
<div class="a" style="left:141px;top:736px;width:45px;height:31px;border:1px solid #acaca8;border-radius:4px;background:#f1f1f0"><span class="a" style="left:10px;top:0;line-height:28px;font-size:12.5px;color:#b4b6b6">0</span><span class="a" style="left:30px;top:0;width:1px;height:29px;background:#d5d5d3"></span><span class="a" style="left:31px;top:14px;width:13px;height:1px;background:#d5d5d3"></span><span class="a" style="left:33px;top:5px;border:4.6px solid transparent;border-top:0;border-bottom:4.6px solid #8e9192;width:0;height:0"></span><span class="a" style="left:33px;top:19.5px;border:4.6px solid transparent;border-bottom:0;border-top:4.6px solid #8e9192;width:0;height:0"></span></div>
<div class="a sep" style="left:190px;top:736px;height:31px"></div>
<svg class="a" style="left:196px;top:744px" width="14" height="13" viewBox="0 0 14 13"><path d="M.8 7.2C3 4.4 6 3.8 8 4C10 4.2 11.6 5.4 12.2 7C10.6 9.2 8.6 10 6.6 10C4 10 2 8.6 .8 7.2Z" fill="#fff" stroke="#111" stroke-width="1.1" stroke-linejoin="round"/><circle cx="6.8" cy="6.9" r="2.6" fill="#0a0a0a"/><circle cx="6" cy="6" r=".7" fill="#fff"/><path d="M1.2 3.4L3 5M3.6 1.2L4.8 4M7.4 .4V3.6M11 1.4L9.6 4.2M12.6 4L11.4 5.4" stroke="#111" stroke-width="1.1"/><path d="M1.6 8.6C3.4 10.6 5.6 11.2 7.4 11C9.4 10.8 11 9.8 12 8.4" fill="none" stroke="#111" stroke-width=".8"/></svg>
<svg class="a" style="left:219px;top:744px" width="12" height="13" viewBox="0 0 12 13"><defs><linearGradient id="lkg2" x1="0" y1="0" x2="1" y2="1"><stop offset="0" stop-color="#ffffff"/><stop offset="0.5" stop-color="#fbf0a0"/><stop offset="1" stop-color="#e8c81a"/></linearGradient></defs><path d="M3 1.4H7C8.5 1.4 8.8 2.8 8.9 5.2" fill="none" stroke="#111" stroke-width="1.2"/><path d="M2 5.6L9.6 4.9L10.6 11L2.6 11.8Z" fill="url(#lkg2)" stroke="#111" stroke-width="1.2" stroke-linejoin="round"/><path d="M5.4 7.2H7.2L6.6 9.8Z" fill="#111" stroke="#111" stroke-width=".5"/></svg>
<div class="a nb" style="left:237px;top:736px;width:90px;height:31px"><span class="a" style="left:10px;top:0;line-height:29px;font-size:12.6px">&#8226;Layer 1</span><span class="a" style="left:67px;top:12.5px;border:5.3px solid transparent;border-bottom:0;border-top:5.2px solid #2e3436;width:0;height:0"></span></div>
<span class="a" style="left:332.6px;top:742px;font-size:14.69px;line-height:18px">No objects selected. Click, Shift+click, Alt+scroll mouse on top of objects, or drag around objects to select.</span>
<div class="a sep" style="left:1198px;top:736px;height:32px"></div>
<span class="a st" style="left:1201px;top:735px">X:</span><span class="a st" style="left:1201px;top:751px">Y:</span>
<span class="a mono" style="left:1200px;top:735px;width:68.3px;text-align:right">-1308.57</span><span class="a mono" style="left:1200px;top:751px;width:68.3px;text-align:right">788.57</span>
<span class="a st" style="left:1278px;top:743px">Z:</span>
<div class="a" style="left:1291px;top:736px;width:55px;height:31px;border:1px solid #acaca8;border-radius:4px;background:#fff"><span class="a mono" style="left:0;top:0;width:35.3px;text-align:right;line-height:29px">35%</span><span class="a" style="left:39px;top:0;width:1px;height:29px;background:#dadad8"></span><span class="a" style="left:40px;top:14px;width:14px;height:1px;background:#dadad8"></span><span class="a" style="left:42px;top:5px;border:4.7px solid transparent;border-top:0;border-bottom:4.5px solid #2e3436;width:0;height:0"></span><span class="a" style="left:42px;top:20px;border:4.7px solid transparent;border-bottom:0;border-top:4.5px solid #2e3436;width:0;height:0"></span></div>
<div id="tip" class="a"><span class="a" style="left:13px;top:0">Create rectangles and squares (F4)</span></div>
</div></body></html>
